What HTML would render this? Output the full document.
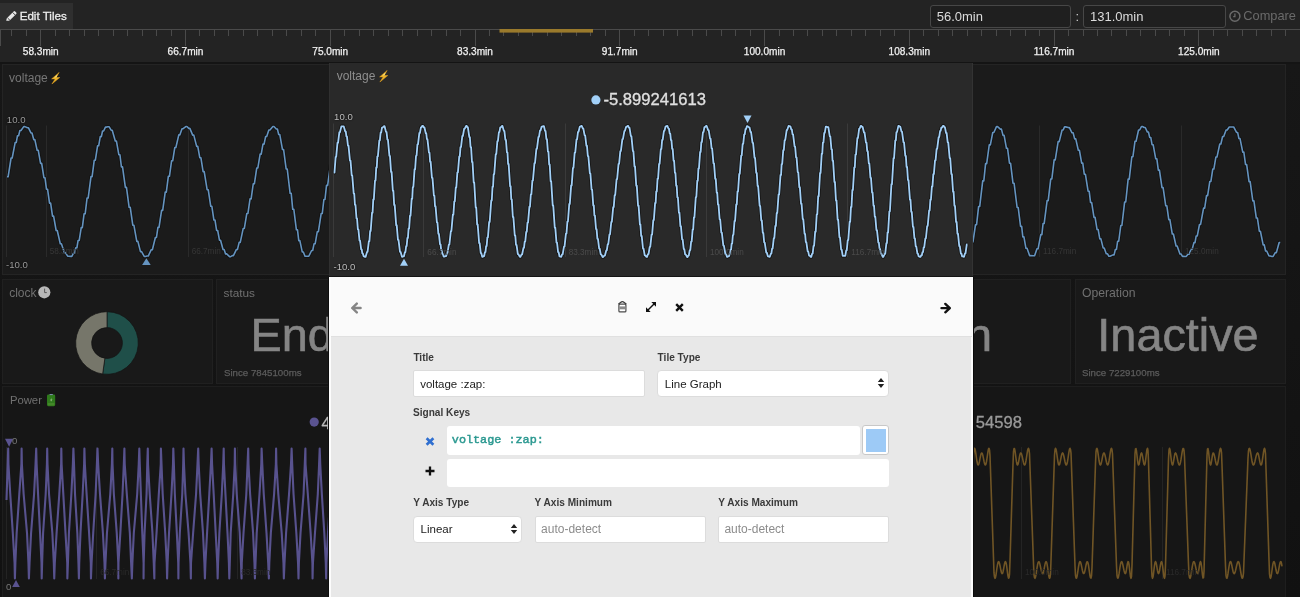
<!DOCTYPE html><html><head><meta charset="utf-8"><style>html,body{margin:0;padding:0}body{width:1300px;height:597px;overflow:hidden;position:relative;background:linear-gradient(#171717 64px,#111111 597px);font-family:"Liberation Sans",sans-serif}#root{position:absolute;left:0;top:0;width:1300px;height:597px;will-change:transform}</style></head><body><div id="root">
<div style="position:absolute;left:0px;top:0px;width:1300px;height:62px;background:#232323;"></div>
<div style="position:absolute;left:0px;top:62px;width:1300px;height:2px;background:#141414;"></div>
<div style="position:absolute;left:0px;top:3px;width:73px;height:25.5px;background:#2f2f2f;"></div>
<svg style="position:absolute;left:5px;top:10px" width="13" height="12" viewBox="0 0 13 12"><path d="M1.2,10.8 L1.8,8.2 L8.6,1.4 Q9.4,0.6 10.2,1.4 L11.2,2.4 Q12,3.2 11.2,4 L4.4,10.8 Z" fill="#e6e6e6"/><path d="M2.6,8.0 L5.0,10.4" stroke="#2f2f2f" stroke-width="0.9"/><path d="M7.6,2.4 L10.2,5.0" stroke="#2f2f2f" stroke-width="0.9"/></svg>
<div style="position:absolute;left:19.70px;top:10.18px;font-size:11.6px;line-height:11.6px;color:#ececec;font-weight:400;white-space:nowrap;font-family:'Liberation Sans', sans-serif;-webkit-text-stroke:0.3px #ececec">Edit Tiles</div>
<div style="position:absolute;left:929.8px;top:5px;width:139.5px;height:20.5px;border:1px solid #474747;border-radius:3px;background:#1f1f1f"></div>
<div style="position:absolute;left:1083px;top:5px;width:141px;height:20.5px;border:1px solid #474747;border-radius:3px;background:#1f1f1f"></div>
<div style="position:absolute;left:936.70px;top:10.20px;font-size:13px;line-height:13px;color:#dcdcdc;font-weight:400;white-space:nowrap;font-family:'Liberation Sans', sans-serif;">56.0min</div>
<div style="position:absolute;left:1075.50px;top:10.20px;font-size:13px;line-height:13px;color:#cfcfcf;font-weight:400;white-space:nowrap;font-family:'Liberation Sans', sans-serif;">:</div>
<div style="position:absolute;left:1090.00px;top:10.20px;font-size:13px;line-height:13px;color:#dcdcdc;font-weight:400;white-space:nowrap;font-family:'Liberation Sans', sans-serif;">131.0min</div>
<svg style="position:absolute;left:1229px;top:10px" width="13" height="13" viewBox="0 0 13 13"><circle cx="5.9" cy="6.3" r="5" fill="none" stroke="#6a6a6a" stroke-width="1.5"/><path d="M5.9,3.6 L5.9,6.6 L4.2,6.6" fill="none" stroke="#6a6a6a" stroke-width="1.3"/></svg>
<div style="position:absolute;left:1243.30px;top:10.16px;font-size:12.8px;line-height:12.8px;color:#6a6a6a;font-weight:400;white-space:nowrap;font-family:'Liberation Sans', sans-serif;">Compare</div>
<svg style="position:absolute;left:0;top:0" width="1300" height="62"><path d="M0,29.5 H1300" stroke="#4a4a4a" stroke-width="1"/><path d="M0.5,29 V46 M11.5,29 V36 M26.5,29 V36 M40.5,29 V46 M55.5,29 V36 M69.5,29 V36 M84.5,29 V36 M98.5,29 V36 M113.5,29 V36 M127.5,29 V36 M142.5,29 V36 M156.5,29 V36 M171.5,29 V36 M185.5,29 V46 M199.5,29 V36 M214.5,29 V36 M228.5,29 V36 M243.5,29 V36 M257.5,29 V36 M272.5,29 V36 M286.5,29 V36 M301.5,29 V36 M315.5,29 V36 M330.5,29 V46 M344.5,29 V36 M359.5,29 V36 M373.5,29 V36 M388.5,29 V36 M402.5,29 V36 M417.5,29 V36 M431.5,29 V36 M446.5,29 V36 M460.5,29 V36 M475.5,29 V46 M489.5,29 V36 M503.5,29 V36 M518.5,29 V36 M532.5,29 V36 M547.5,29 V36 M561.5,29 V36 M576.5,29 V36 M590.5,29 V36 M605.5,29 V36 M619.5,29 V46 M634.5,29 V36 M648.5,29 V36 M663.5,29 V36 M677.5,29 V36 M692.5,29 V36 M706.5,29 V36 M721.5,29 V36 M735.5,29 V36 M750.5,29 V36 M764.5,29 V46 M779.5,29 V36 M793.5,29 V36 M807.5,29 V36 M822.5,29 V36 M836.5,29 V36 M851.5,29 V36 M865.5,29 V36 M880.5,29 V36 M894.5,29 V36 M909.5,29 V46 M923.5,29 V36 M938.5,29 V36 M952.5,29 V36 M967.5,29 V36 M981.5,29 V36 M996.5,29 V36 M1010.5,29 V36 M1025.5,29 V36 M1039.5,29 V36 M1054.5,29 V46 M1068.5,29 V36 M1083.5,29 V36 M1097.5,29 V36 M1111.5,29 V36 M1126.5,29 V36 M1140.5,29 V36 M1155.5,29 V36 M1169.5,29 V36 M1184.5,29 V36 M1198.5,29 V46 M1213.5,29 V36 M1227.5,29 V36 M1242.5,29 V36 M1256.5,29 V36 M1271.5,29 V36 M1285.5,29 V36 M1300.5,29 V36 " stroke="#4a4a4a" stroke-width="1"/><rect x="499.5" y="29" width="93.5" height="3.6" fill="#9a7a2c"/></svg>
<div style="position:absolute;left:-259.26px;width:600px;text-align:center;top:46.95px;font-size:10.1px;line-height:10.1px;color:#f0f0f0;font-weight:400;white-space:nowrap;font-family:'Liberation Sans', sans-serif;-webkit-text-stroke:0.25px #f0f0f0">58.3min</div>
<div style="position:absolute;left:-114.50px;width:600px;text-align:center;top:46.95px;font-size:10.1px;line-height:10.1px;color:#f0f0f0;font-weight:400;white-space:nowrap;font-family:'Liberation Sans', sans-serif;-webkit-text-stroke:0.25px #f0f0f0">66.7min</div>
<div style="position:absolute;left:30.26px;width:600px;text-align:center;top:46.95px;font-size:10.1px;line-height:10.1px;color:#f0f0f0;font-weight:400;white-space:nowrap;font-family:'Liberation Sans', sans-serif;-webkit-text-stroke:0.25px #f0f0f0">75.0min</div>
<div style="position:absolute;left:175.02px;width:600px;text-align:center;top:46.95px;font-size:10.1px;line-height:10.1px;color:#f0f0f0;font-weight:400;white-space:nowrap;font-family:'Liberation Sans', sans-serif;-webkit-text-stroke:0.25px #f0f0f0">83.3min</div>
<div style="position:absolute;left:319.78px;width:600px;text-align:center;top:46.95px;font-size:10.1px;line-height:10.1px;color:#f0f0f0;font-weight:400;white-space:nowrap;font-family:'Liberation Sans', sans-serif;-webkit-text-stroke:0.25px #f0f0f0">91.7min</div>
<div style="position:absolute;left:464.54px;width:600px;text-align:center;top:46.95px;font-size:10.1px;line-height:10.1px;color:#f0f0f0;font-weight:400;white-space:nowrap;font-family:'Liberation Sans', sans-serif;-webkit-text-stroke:0.25px #f0f0f0">100.0min</div>
<div style="position:absolute;left:609.30px;width:600px;text-align:center;top:46.95px;font-size:10.1px;line-height:10.1px;color:#f0f0f0;font-weight:400;white-space:nowrap;font-family:'Liberation Sans', sans-serif;-webkit-text-stroke:0.25px #f0f0f0">108.3min</div>
<div style="position:absolute;left:754.06px;width:600px;text-align:center;top:46.95px;font-size:10.1px;line-height:10.1px;color:#f0f0f0;font-weight:400;white-space:nowrap;font-family:'Liberation Sans', sans-serif;-webkit-text-stroke:0.25px #f0f0f0">116.7min</div>
<div style="position:absolute;left:898.82px;width:600px;text-align:center;top:46.95px;font-size:10.1px;line-height:10.1px;color:#f0f0f0;font-weight:400;white-space:nowrap;font-family:'Liberation Sans', sans-serif;-webkit-text-stroke:0.25px #f0f0f0">125.0min</div>
<div style="position:absolute;left:2px;top:64px;width:1282px;height:209px;background:#1b1b1b;border:1px solid #242424"></div>
<div style="position:absolute;left:2px;top:279px;width:209px;height:102.5px;background:#191919;border:1px solid #202020"></div>
<div style="position:absolute;left:216px;top:279px;width:209px;height:102.5px;background:#191919;border:1px solid #202020"></div>
<div style="position:absolute;left:430px;top:279px;width:209px;height:102.5px;background:#191919;border:1px solid #202020"></div>
<div style="position:absolute;left:645px;top:279px;width:424px;height:102.5px;background:#191919;border:1px solid #202020"></div>
<div style="position:absolute;left:1075px;top:279px;width:209px;height:102.5px;background:#191919;border:1px solid #202020"></div>
<div style="position:absolute;left:2px;top:385.5px;width:638px;height:211.5px;background:#161616;border:1px solid #1e1e1e"></div>
<div style="position:absolute;left:645px;top:385.5px;width:639px;height:211.5px;background:#161616;border:1px solid #1e1e1e"></div>
<div style="position:absolute;left:9.10px;top:71.64px;font-size:12px;line-height:12px;color:#767676;font-weight:400;white-space:nowrap;font-family:'Liberation Sans', sans-serif;">voltage</div>
<svg style="position:absolute;left:51px;top:71.8px" width="10" height="13" viewBox="0 0 10 13"><path d="M8.2,0.4 L0.6,6.9 L4.1,6.9 L0.9,12 L8.8,5.5 L5.1,5.5 Z" fill="#eeb52a" stroke="#e0a020" stroke-width="0.5" stroke-linejoin="round"/><path d="M6.6,2.2 L3.2,5.4 L5.6,5.4 Z" fill="#f8dc70"/></svg>
<div style="position:absolute;left:6.80px;top:114.57px;font-size:9.6px;line-height:9.6px;color:#9a9a9a;font-weight:400;white-space:nowrap;font-family:'Liberation Sans', sans-serif;text-shadow:0 0 2px #000">10.0</div>
<div style="position:absolute;left:6.00px;top:260.47px;font-size:9.6px;line-height:9.6px;color:#9a9a9a;font-weight:400;white-space:nowrap;font-family:'Liberation Sans', sans-serif;text-shadow:0 0 2px #000">-10.0</div>
<svg style="position:absolute;left:0;top:0" width="1300" height="280"><path d="M6.5,125.5 V257 M46.5,125.5 V257 M188.5,125.5 V257 M1039.5,125.5 V257 M1181.5,125.5 V257 " stroke="#2a2a2a" stroke-width="1"/><path d="M7.01,176.76 L8.11,176.76 L11.09,158.00 L12.19,158.00 L15.15,142.55 L16.25,142.55 L17.49,135.68 L18.59,135.68 L19.90,130.52 L21.00,130.52 L23.74,126.61 L24.84,126.61 L27.40,127.82 L28.50,127.82 L30.92,132.93 L32.02,132.93 L33.75,139.62 L34.85,139.62 L37.16,150.31 L38.26,150.31 L40.56,163.34 L41.66,163.34 L43.92,177.74 L45.02,177.74 L46.46,189.21 L47.56,189.21 L49.53,203.10 L50.63,203.10 L52.52,216.16 L53.62,216.16 L56.15,230.50 L57.25,230.50 L60.30,243.80 L61.40,243.80 L64.36,252.61 L65.46,252.61 L67.65,256.18 L68.75,256.18 L70.74,256.33 L71.84,256.33 L73.50,253.03 L74.60,253.03 L75.81,247.75 L76.91,247.75 L78.10,240.44 L79.20,240.44 L81.23,227.62 L82.33,227.62 L84.08,213.79 L85.18,213.79 L87.05,198.05 L88.15,198.05 L91.01,176.67 L92.11,176.67 L94.26,160.21 L95.36,160.21 L97.57,145.79 L98.67,145.79 L100.27,136.61 L101.37,136.61 L102.55,130.99 L103.65,130.99 L105.42,127.08 L106.52,127.08 L107.92,126.68 L109.02,126.68 L111.14,130.18 L112.24,130.18 L115.29,140.93 L116.39,140.93 L118.83,154.73 L119.93,154.73 L121.42,166.86 L122.52,166.86 L125.37,187.34 L126.47,187.34 L129.14,207.30 L130.24,207.30 L132.79,225.23 L133.89,225.23 L136.78,241.33 L137.88,241.33 L140.48,251.62 L141.58,251.62 L144.24,256.44 L145.34,256.44 L147.16,256.03 L148.26,256.03 L151.28,249.72 L152.38,249.72 L155.37,237.49 L156.47,237.49 L157.92,227.38 L159.02,227.38 L161.60,210.35 L162.70,210.35 L165.22,192.13 L166.32,192.13 L168.34,176.28 L169.44,176.28 L171.60,160.76 L172.70,160.76 L174.78,147.54 L175.88,147.54 L178.80,134.84 L179.90,134.84 L182.00,128.69 L183.10,128.69 L185.83,126.55 L186.93,126.55 L188.75,128.42 L189.85,128.42 L192.69,135.16 L193.79,135.16 L196.66,146.35 L197.76,146.35 L199.78,157.70 L200.88,157.70 L203.11,171.59 L204.21,171.59 L207.12,189.70 L208.22,189.70 L210.75,206.28 L211.85,206.28 L213.92,220.02 L215.02,220.02 L216.59,230.49 L217.69,230.49 L219.45,240.19 L220.55,240.19 L223.04,249.49 L224.14,249.49 L225.59,253.91 L226.69,253.91 L229.58,256.69 L230.68,256.69 L232.33,255.58 L233.43,255.58 L236.32,249.57 L237.42,249.57 L239.16,242.37 L240.26,242.37 L243.23,228.43 L244.33,228.43 L246.83,213.47 L247.93,213.47 L250.04,198.87 L251.14,198.87 L253.27,183.76 L254.37,183.76 L256.76,167.95 L257.86,167.95 L260.13,154.09 L261.23,154.09 L262.97,144.08 L264.07,144.08 L265.61,136.54 L266.71,136.54 L268.83,130.03 L269.93,130.03 L272.87,126.55 L273.97,126.55 L276.30,128.94 L277.40,128.94 L278.69,134.56 L279.79,134.56 L282.50,149.52 L283.60,149.52 L286.14,168.97 L287.24,168.97 L290.12,193.30 L291.22,193.30 L292.73,209.32 L293.83,209.32 L296.40,229.79 L297.50,229.79 L298.75,240.60 L299.85,240.60 L302.24,251.95 L303.34,251.95 L305.01,256.23 L306.11,256.23 L307.68,256.25 L308.78,256.25 L311.60,250.51 L312.70,250.51 L314.05,243.79 L315.15,243.79 L317.29,231.68 L318.39,231.68 L321.17,213.56 L322.27,213.56 L323.88,199.47 L324.98,199.47 L326.52,185.34 L327.62,185.34 L330.46,165.07 L331.56,165.07 L333.51,151.13 L334.61,151.13 L337.12,137.96 L338.22,137.96 L339.43,131.98 L340.53,131.98 L342.36,127.46 L343.46,127.46 L344.93,126.56 L346.03,126.56 L348.46,130.45 L349.56,130.45 L350.86,136.43 L351.96,136.43 L354.93,151.89 L356.03,151.89 L357.22,162.91 L358.32,162.91 L360.86,182.59 L361.96,182.59 L363.14,195.51 L364.24,195.51 L365.88,210.73 L366.98,210.73 L369.68,229.95 L370.78,229.95 L372.22,240.58 L373.32,240.58 L374.81,248.95 L375.91,248.95 L378.38,255.63 L379.48,255.63 L381.36,256.58 L382.46,256.58 L383.68,255.18 L384.78,255.18 L387.82,248.90 L388.92,248.90 L390.35,242.84 L391.45,242.84 L392.66,236.02 L393.76,236.02 L395.56,225.96 L396.66,225.96 L398.99,212.45 L400.09,212.45 L402.65,196.78 L403.75,196.78 L405.11,186.05 L406.21,186.05 L408.00,173.64 L409.10,173.64 L410.29,164.23 L411.39,164.23 L413.40,152.60 L414.50,152.60 L417.11,140.94 L418.21,140.94 L420.77,132.51 L421.87,132.51 L424.74,127.40 L425.84,127.40 L428.43,126.89 L429.53,126.89 L432.33,133.25 L433.43,133.25 L435.92,145.41 L437.02,145.41 L439.07,160.03 L440.17,160.03 L441.74,174.47 L442.84,174.47 L445.25,194.77 L446.35,194.77 L448.10,211.11 L449.20,211.11 L450.53,224.12 L451.63,224.12 L453.63,238.36 L454.73,238.36 L457.55,251.10 L458.65,251.10 L460.04,255.47 L461.14,255.47 L463.40,256.43 L464.50,256.43 L466.39,253.43 L467.49,253.43 L469.62,246.65 L470.72,246.65 L472.14,239.05 L473.24,239.05 L476.22,223.19 L477.32,223.19 L478.96,210.76 L480.06,210.76 L482.36,194.23 L483.46,194.23 L485.41,179.25 L486.51,179.25 L487.68,168.45 L488.78,168.45 L491.00,154.05 L492.10,154.05 L493.50,144.65 L494.60,144.65 L495.85,137.40 L496.95,137.40 L498.16,131.95 L499.26,131.95 L500.71,128.05 L501.81,128.05 L503.13,126.54 L504.23,126.54 L506.59,128.00 L507.69,128.00 L509.81,132.84 L510.91,132.84 L513.94,143.53 L515.04,143.53 L517.97,158.00 L519.07,158.00 L522.12,175.77 L523.22,175.77 L524.80,188.11 L525.90,188.11 L527.90,202.46 L529.00,202.46 L530.62,214.67 L531.72,214.67 L534.00,228.55 L535.10,228.55 L537.43,240.48 L538.53,240.48 L541.21,250.18 L542.31,250.18 L544.81,255.48 L545.91,255.48 L547.54,256.70 L548.64,256.70 L550.60,255.48 L551.70,255.48 L553.85,251.59 L554.95,251.59 L556.10,247.41 L557.20,247.41 L558.40,241.96 L559.50,241.96 L561.43,233.22 L562.53,233.22 L563.88,225.01 L564.98,225.01 L567.51,211.46 L568.61,211.46 L570.22,200.65 L571.32,200.65 L572.65,190.70 L573.75,190.70 L575.24,180.13 L576.34,180.13 L577.92,169.50 L579.02,169.50 L580.58,159.59 L581.68,159.59 L583.82,148.75 L584.92,148.75 L586.95,139.97 L588.05,139.97 L589.78,133.74 L590.88,133.74 L593.26,128.64 L594.36,128.64 L595.90,126.76 L597.00,126.76 L599.88,128.01 L600.98,128.01 L603.97,136.49 L605.07,136.49 L607.61,149.57 L608.71,149.57 L610.69,163.75 L611.79,163.75 L613.91,180.60 L615.01,180.60 L617.26,199.00 L618.36,199.00 L619.60,211.56 L620.70,211.56 L622.64,226.66 L623.74,226.66 L625.89,240.22 L626.99,240.22 L628.48,248.46 L629.58,248.46 L630.90,253.71 L632.00,253.71 L634.68,256.69 L635.78,256.69 L637.62,254.85 L638.72,254.85 L640.86,249.16 L641.96,249.16 L644.87,237.31 L645.97,237.31 L648.28,223.83 L649.38,223.83 L651.08,211.10 L652.18,211.10 L655.21,190.88 L656.31,190.88 L658.16,176.33 L659.26,176.33 L660.44,165.61 L661.54,165.61 L663.99,150.55 L665.09,150.55 L666.43,141.91 L667.53,141.91 L669.26,134.05 L670.36,134.05 L673.11,127.70 L674.21,127.70 L676.64,126.70 L677.74,126.70 L678.91,128.54 L680.01,128.54 L682.02,134.11 L683.12,134.11 L685.05,142.65 L686.15,142.65 L688.22,154.38 L689.32,154.38 L690.86,165.83 L691.96,165.83 L694.23,181.90 L695.33,181.90 L696.61,193.71 L697.71,193.71 L699.40,207.40 L700.50,207.40 L702.35,221.14 L703.45,221.14 L706.39,237.35 L707.49,237.35 L708.78,244.99 L709.88,244.99 L712.47,253.24 L713.57,253.24 L715.08,256.17 L716.18,256.17 L718.41,256.07 L719.51,256.07 L721.40,251.79 L722.50,251.79 L724.53,243.29 L725.63,243.29 L728.22,228.78 L729.32,228.78 L731.22,214.30 L732.32,214.30 L733.69,201.23 L734.79,201.23 L736.17,187.75 L737.27,187.75 L738.56,174.85 L739.66,174.85 L742.43,155.64 L743.53,155.64 L745.90,141.56 L747.00,141.56 L749.99,130.48 L751.09,130.48 L753.56,126.59 L754.66,126.59 L755.84,126.96 L756.94,126.96 L759.35,130.91 L760.45,130.91 L763.08,139.27 L764.18,139.27 L766.71,150.96 L767.81,150.96 L769.91,163.54 L771.01,163.54 L772.83,176.35 L773.93,176.35 L775.95,190.72 L777.05,190.72 L779.72,208.10 L780.82,208.10 L782.48,220.11 L783.58,220.11 L785.73,232.83 L786.83,232.83 L788.89,243.06 L789.99,243.06 L792.96,252.34 L794.06,252.34 L796.75,256.39 L797.85,256.39 L800.78,255.29 L801.88,255.29 L804.62,248.46 L805.72,248.46 L807.43,240.20 L808.53,240.20 L810.12,230.12 L811.22,230.12 L813.29,216.05 L814.39,216.05 L816.03,202.69 L817.13,202.69 L819.09,187.19 L820.19,187.19 L822.64,169.61 L823.74,169.61 L826.64,151.83 L827.74,151.83 L830.01,139.81 L831.11,139.81 L833.82,130.52 L834.92,130.52 L836.24,127.37 L837.34,127.37 L839.16,126.62 L840.26,126.62 L843.32,130.83 L844.42,130.83 L845.84,136.18 L846.94,136.18 L848.88,145.15 L849.98,145.15 L851.25,153.77 L852.35,153.77 L853.65,163.70 L854.75,163.70 L857.61,181.78 L858.71,181.78 L861.75,201.54 L862.85,201.54 L865.24,217.55 L866.34,217.55 L867.72,227.99 L868.82,227.99 L870.53,238.30 L871.63,238.30 L873.22,246.30 L874.32,246.30 L876.74,253.53 L877.84,253.53 L880.29,256.61 L881.39,256.61 L883.38,255.60 L884.48,255.60 L886.62,250.64 L887.72,250.64 L889.08,244.40 L890.18,244.40 L892.35,233.16 L893.45,233.16 L896.42,215.63 L897.52,215.63 L900.11,197.62 L901.21,197.62 L902.53,185.42 L903.63,185.42 L905.77,169.58 L906.87,169.58 L909.38,153.54 L910.48,153.54 L912.11,143.30 L913.21,143.30 L916.07,132.39 L917.17,132.39 L919.20,127.63 L920.30,127.63 L922.79,126.74 L923.89,126.74 L925.80,129.50 L926.90,129.50 L929.95,138.13 L931.05,138.13 L933.70,150.09 L934.80,150.09 L937.04,163.38 L938.14,163.38 L939.56,174.54 L940.66,174.54 L942.64,188.97 L943.74,188.97 L944.94,199.82 L946.04,199.82 L948.32,215.31 L949.42,215.31 L952.25,231.47 L953.35,231.47 L954.84,240.39 L955.94,240.39 L958.06,249.06 L959.16,249.06 L961.23,254.53 L962.33,254.53 L964.24,256.65 L965.34,256.65 L967.85,253.85 L968.95,253.85 L971.89,241.89 L972.99,241.89 L975.48,224.78 L976.58,224.78 L978.63,206.44 L979.73,206.44 L982.72,180.86 L983.82,180.86 L985.59,163.62 L986.69,163.62 L989.26,144.91 L990.36,144.91 L992.77,132.47 L993.87,132.47 L996.47,126.67 L997.57,126.67 L1000.34,129.13 L1001.44,129.13 L1003.02,135.42 L1004.12,135.42 L1006.45,148.32 L1007.55,148.32 L1009.46,163.19 L1010.56,163.19 L1012.98,183.18 L1014.08,183.18 L1017.10,207.49 L1018.20,207.49 L1020.56,226.34 L1021.66,226.34 L1022.82,236.91 L1023.92,236.91 L1025.95,248.27 L1027.05,248.27 L1029.56,255.59 L1030.66,255.59 L1033.49,255.69 L1034.59,255.69 L1036.98,248.80 L1038.08,248.80 L1040.79,234.64 L1041.89,234.64 L1043.06,223.55 L1044.16,223.55 L1047.11,200.67 L1048.21,200.67 L1050.75,178.95 L1051.85,178.95 L1054.16,159.86 L1055.26,159.86 L1058.14,141.60 L1059.24,141.60 L1062.08,130.06 L1063.18,130.06 L1064.51,126.88 L1065.61,126.88 L1068.31,127.60 L1069.41,127.60 L1072.03,132.79 L1073.13,132.79 L1074.65,138.87 L1075.75,138.87 L1078.32,150.28 L1079.42,150.28 L1081.68,163.13 L1082.78,163.13 L1084.29,174.22 L1085.39,174.22 L1088.08,191.22 L1089.18,191.22 L1090.58,202.56 L1091.68,202.56 L1094.00,217.42 L1095.10,217.42 L1097.07,229.56 L1098.17,229.56 L1099.80,238.89 L1100.90,238.89 L1103.12,247.93 L1104.22,247.93 L1106.26,253.68 L1107.36,253.68 L1108.90,256.22 L1110.00,256.22 L1112.99,254.88 L1114.09,254.88 L1115.37,249.43 L1116.47,249.43 L1117.62,241.25 L1118.72,241.25 L1120.79,225.49 L1121.89,225.49 L1124.64,201.96 L1125.74,201.96 L1128.14,179.08 L1129.24,179.08 L1131.83,156.72 L1132.93,156.72 L1135.00,141.22 L1136.10,141.22 L1138.54,130.00 L1139.64,130.00 L1141.42,126.55 L1142.52,126.55 L1144.17,127.52 L1145.27,127.52 L1147.38,132.07 L1148.48,132.07 L1149.67,137.44 L1150.77,137.44 L1152.06,144.73 L1153.16,144.73 L1155.75,158.80 L1156.85,158.80 L1158.32,170.16 L1159.42,170.16 L1162.01,187.67 L1163.11,187.67 L1165.75,205.79 L1166.85,205.79 L1168.77,219.63 L1169.87,219.63 L1172.30,234.01 L1173.40,234.01 L1176.06,246.03 L1177.16,246.03 L1179.95,254.00 L1181.05,254.00 L1182.45,256.36 L1183.55,256.36 L1185.01,256.50 L1186.11,256.50 L1187.98,254.23 L1189.08,254.23 L1191.11,249.21 L1192.21,249.21 L1193.92,242.59 L1195.02,242.59 L1196.18,235.95 L1197.28,235.95 L1199.49,224.48 L1200.59,224.48 L1203.58,208.16 L1204.68,208.16 L1206.53,195.60 L1207.63,195.60 L1209.80,181.48 L1210.90,181.48 L1212.77,169.04 L1213.87,169.04 L1215.86,157.06 L1216.96,157.06 L1219.78,144.03 L1220.88,144.03 L1222.61,136.55 L1223.71,136.55 L1226.09,130.04 L1227.19,130.04 L1229.26,126.97 L1230.36,126.97 L1232.54,126.93 L1233.64,126.93 L1236.53,132.43 L1237.63,132.43 L1238.92,138.55 L1240.02,138.55 L1242.74,152.14 L1243.84,152.14 L1245.57,164.54 L1246.67,164.54 L1249.05,181.60 L1250.15,181.60 L1252.82,200.87 L1253.92,200.87 L1256.31,218.05 L1257.41,218.05 L1259.31,231.23 L1260.41,231.23 L1263.16,244.87 L1264.26,244.87 L1265.58,250.99 L1266.68,250.99 L1269.03,255.98 L1270.13,255.98 L1272.02,256.44 L1273.12,256.44 L1275.28,252.59 L1276.38,252.59 L1279.16,242.44 L1280.26,242.44" fill="none" stroke="#0e0e0e" stroke-width="3.4" stroke-linejoin="round" opacity="0.6"/><path d="M7.01,176.76 L8.11,176.76 L11.09,158.00 L12.19,158.00 L15.15,142.55 L16.25,142.55 L17.49,135.68 L18.59,135.68 L19.90,130.52 L21.00,130.52 L23.74,126.61 L24.84,126.61 L27.40,127.82 L28.50,127.82 L30.92,132.93 L32.02,132.93 L33.75,139.62 L34.85,139.62 L37.16,150.31 L38.26,150.31 L40.56,163.34 L41.66,163.34 L43.92,177.74 L45.02,177.74 L46.46,189.21 L47.56,189.21 L49.53,203.10 L50.63,203.10 L52.52,216.16 L53.62,216.16 L56.15,230.50 L57.25,230.50 L60.30,243.80 L61.40,243.80 L64.36,252.61 L65.46,252.61 L67.65,256.18 L68.75,256.18 L70.74,256.33 L71.84,256.33 L73.50,253.03 L74.60,253.03 L75.81,247.75 L76.91,247.75 L78.10,240.44 L79.20,240.44 L81.23,227.62 L82.33,227.62 L84.08,213.79 L85.18,213.79 L87.05,198.05 L88.15,198.05 L91.01,176.67 L92.11,176.67 L94.26,160.21 L95.36,160.21 L97.57,145.79 L98.67,145.79 L100.27,136.61 L101.37,136.61 L102.55,130.99 L103.65,130.99 L105.42,127.08 L106.52,127.08 L107.92,126.68 L109.02,126.68 L111.14,130.18 L112.24,130.18 L115.29,140.93 L116.39,140.93 L118.83,154.73 L119.93,154.73 L121.42,166.86 L122.52,166.86 L125.37,187.34 L126.47,187.34 L129.14,207.30 L130.24,207.30 L132.79,225.23 L133.89,225.23 L136.78,241.33 L137.88,241.33 L140.48,251.62 L141.58,251.62 L144.24,256.44 L145.34,256.44 L147.16,256.03 L148.26,256.03 L151.28,249.72 L152.38,249.72 L155.37,237.49 L156.47,237.49 L157.92,227.38 L159.02,227.38 L161.60,210.35 L162.70,210.35 L165.22,192.13 L166.32,192.13 L168.34,176.28 L169.44,176.28 L171.60,160.76 L172.70,160.76 L174.78,147.54 L175.88,147.54 L178.80,134.84 L179.90,134.84 L182.00,128.69 L183.10,128.69 L185.83,126.55 L186.93,126.55 L188.75,128.42 L189.85,128.42 L192.69,135.16 L193.79,135.16 L196.66,146.35 L197.76,146.35 L199.78,157.70 L200.88,157.70 L203.11,171.59 L204.21,171.59 L207.12,189.70 L208.22,189.70 L210.75,206.28 L211.85,206.28 L213.92,220.02 L215.02,220.02 L216.59,230.49 L217.69,230.49 L219.45,240.19 L220.55,240.19 L223.04,249.49 L224.14,249.49 L225.59,253.91 L226.69,253.91 L229.58,256.69 L230.68,256.69 L232.33,255.58 L233.43,255.58 L236.32,249.57 L237.42,249.57 L239.16,242.37 L240.26,242.37 L243.23,228.43 L244.33,228.43 L246.83,213.47 L247.93,213.47 L250.04,198.87 L251.14,198.87 L253.27,183.76 L254.37,183.76 L256.76,167.95 L257.86,167.95 L260.13,154.09 L261.23,154.09 L262.97,144.08 L264.07,144.08 L265.61,136.54 L266.71,136.54 L268.83,130.03 L269.93,130.03 L272.87,126.55 L273.97,126.55 L276.30,128.94 L277.40,128.94 L278.69,134.56 L279.79,134.56 L282.50,149.52 L283.60,149.52 L286.14,168.97 L287.24,168.97 L290.12,193.30 L291.22,193.30 L292.73,209.32 L293.83,209.32 L296.40,229.79 L297.50,229.79 L298.75,240.60 L299.85,240.60 L302.24,251.95 L303.34,251.95 L305.01,256.23 L306.11,256.23 L307.68,256.25 L308.78,256.25 L311.60,250.51 L312.70,250.51 L314.05,243.79 L315.15,243.79 L317.29,231.68 L318.39,231.68 L321.17,213.56 L322.27,213.56 L323.88,199.47 L324.98,199.47 L326.52,185.34 L327.62,185.34 L330.46,165.07 L331.56,165.07 L333.51,151.13 L334.61,151.13 L337.12,137.96 L338.22,137.96 L339.43,131.98 L340.53,131.98 L342.36,127.46 L343.46,127.46 L344.93,126.56 L346.03,126.56 L348.46,130.45 L349.56,130.45 L350.86,136.43 L351.96,136.43 L354.93,151.89 L356.03,151.89 L357.22,162.91 L358.32,162.91 L360.86,182.59 L361.96,182.59 L363.14,195.51 L364.24,195.51 L365.88,210.73 L366.98,210.73 L369.68,229.95 L370.78,229.95 L372.22,240.58 L373.32,240.58 L374.81,248.95 L375.91,248.95 L378.38,255.63 L379.48,255.63 L381.36,256.58 L382.46,256.58 L383.68,255.18 L384.78,255.18 L387.82,248.90 L388.92,248.90 L390.35,242.84 L391.45,242.84 L392.66,236.02 L393.76,236.02 L395.56,225.96 L396.66,225.96 L398.99,212.45 L400.09,212.45 L402.65,196.78 L403.75,196.78 L405.11,186.05 L406.21,186.05 L408.00,173.64 L409.10,173.64 L410.29,164.23 L411.39,164.23 L413.40,152.60 L414.50,152.60 L417.11,140.94 L418.21,140.94 L420.77,132.51 L421.87,132.51 L424.74,127.40 L425.84,127.40 L428.43,126.89 L429.53,126.89 L432.33,133.25 L433.43,133.25 L435.92,145.41 L437.02,145.41 L439.07,160.03 L440.17,160.03 L441.74,174.47 L442.84,174.47 L445.25,194.77 L446.35,194.77 L448.10,211.11 L449.20,211.11 L450.53,224.12 L451.63,224.12 L453.63,238.36 L454.73,238.36 L457.55,251.10 L458.65,251.10 L460.04,255.47 L461.14,255.47 L463.40,256.43 L464.50,256.43 L466.39,253.43 L467.49,253.43 L469.62,246.65 L470.72,246.65 L472.14,239.05 L473.24,239.05 L476.22,223.19 L477.32,223.19 L478.96,210.76 L480.06,210.76 L482.36,194.23 L483.46,194.23 L485.41,179.25 L486.51,179.25 L487.68,168.45 L488.78,168.45 L491.00,154.05 L492.10,154.05 L493.50,144.65 L494.60,144.65 L495.85,137.40 L496.95,137.40 L498.16,131.95 L499.26,131.95 L500.71,128.05 L501.81,128.05 L503.13,126.54 L504.23,126.54 L506.59,128.00 L507.69,128.00 L509.81,132.84 L510.91,132.84 L513.94,143.53 L515.04,143.53 L517.97,158.00 L519.07,158.00 L522.12,175.77 L523.22,175.77 L524.80,188.11 L525.90,188.11 L527.90,202.46 L529.00,202.46 L530.62,214.67 L531.72,214.67 L534.00,228.55 L535.10,228.55 L537.43,240.48 L538.53,240.48 L541.21,250.18 L542.31,250.18 L544.81,255.48 L545.91,255.48 L547.54,256.70 L548.64,256.70 L550.60,255.48 L551.70,255.48 L553.85,251.59 L554.95,251.59 L556.10,247.41 L557.20,247.41 L558.40,241.96 L559.50,241.96 L561.43,233.22 L562.53,233.22 L563.88,225.01 L564.98,225.01 L567.51,211.46 L568.61,211.46 L570.22,200.65 L571.32,200.65 L572.65,190.70 L573.75,190.70 L575.24,180.13 L576.34,180.13 L577.92,169.50 L579.02,169.50 L580.58,159.59 L581.68,159.59 L583.82,148.75 L584.92,148.75 L586.95,139.97 L588.05,139.97 L589.78,133.74 L590.88,133.74 L593.26,128.64 L594.36,128.64 L595.90,126.76 L597.00,126.76 L599.88,128.01 L600.98,128.01 L603.97,136.49 L605.07,136.49 L607.61,149.57 L608.71,149.57 L610.69,163.75 L611.79,163.75 L613.91,180.60 L615.01,180.60 L617.26,199.00 L618.36,199.00 L619.60,211.56 L620.70,211.56 L622.64,226.66 L623.74,226.66 L625.89,240.22 L626.99,240.22 L628.48,248.46 L629.58,248.46 L630.90,253.71 L632.00,253.71 L634.68,256.69 L635.78,256.69 L637.62,254.85 L638.72,254.85 L640.86,249.16 L641.96,249.16 L644.87,237.31 L645.97,237.31 L648.28,223.83 L649.38,223.83 L651.08,211.10 L652.18,211.10 L655.21,190.88 L656.31,190.88 L658.16,176.33 L659.26,176.33 L660.44,165.61 L661.54,165.61 L663.99,150.55 L665.09,150.55 L666.43,141.91 L667.53,141.91 L669.26,134.05 L670.36,134.05 L673.11,127.70 L674.21,127.70 L676.64,126.70 L677.74,126.70 L678.91,128.54 L680.01,128.54 L682.02,134.11 L683.12,134.11 L685.05,142.65 L686.15,142.65 L688.22,154.38 L689.32,154.38 L690.86,165.83 L691.96,165.83 L694.23,181.90 L695.33,181.90 L696.61,193.71 L697.71,193.71 L699.40,207.40 L700.50,207.40 L702.35,221.14 L703.45,221.14 L706.39,237.35 L707.49,237.35 L708.78,244.99 L709.88,244.99 L712.47,253.24 L713.57,253.24 L715.08,256.17 L716.18,256.17 L718.41,256.07 L719.51,256.07 L721.40,251.79 L722.50,251.79 L724.53,243.29 L725.63,243.29 L728.22,228.78 L729.32,228.78 L731.22,214.30 L732.32,214.30 L733.69,201.23 L734.79,201.23 L736.17,187.75 L737.27,187.75 L738.56,174.85 L739.66,174.85 L742.43,155.64 L743.53,155.64 L745.90,141.56 L747.00,141.56 L749.99,130.48 L751.09,130.48 L753.56,126.59 L754.66,126.59 L755.84,126.96 L756.94,126.96 L759.35,130.91 L760.45,130.91 L763.08,139.27 L764.18,139.27 L766.71,150.96 L767.81,150.96 L769.91,163.54 L771.01,163.54 L772.83,176.35 L773.93,176.35 L775.95,190.72 L777.05,190.72 L779.72,208.10 L780.82,208.10 L782.48,220.11 L783.58,220.11 L785.73,232.83 L786.83,232.83 L788.89,243.06 L789.99,243.06 L792.96,252.34 L794.06,252.34 L796.75,256.39 L797.85,256.39 L800.78,255.29 L801.88,255.29 L804.62,248.46 L805.72,248.46 L807.43,240.20 L808.53,240.20 L810.12,230.12 L811.22,230.12 L813.29,216.05 L814.39,216.05 L816.03,202.69 L817.13,202.69 L819.09,187.19 L820.19,187.19 L822.64,169.61 L823.74,169.61 L826.64,151.83 L827.74,151.83 L830.01,139.81 L831.11,139.81 L833.82,130.52 L834.92,130.52 L836.24,127.37 L837.34,127.37 L839.16,126.62 L840.26,126.62 L843.32,130.83 L844.42,130.83 L845.84,136.18 L846.94,136.18 L848.88,145.15 L849.98,145.15 L851.25,153.77 L852.35,153.77 L853.65,163.70 L854.75,163.70 L857.61,181.78 L858.71,181.78 L861.75,201.54 L862.85,201.54 L865.24,217.55 L866.34,217.55 L867.72,227.99 L868.82,227.99 L870.53,238.30 L871.63,238.30 L873.22,246.30 L874.32,246.30 L876.74,253.53 L877.84,253.53 L880.29,256.61 L881.39,256.61 L883.38,255.60 L884.48,255.60 L886.62,250.64 L887.72,250.64 L889.08,244.40 L890.18,244.40 L892.35,233.16 L893.45,233.16 L896.42,215.63 L897.52,215.63 L900.11,197.62 L901.21,197.62 L902.53,185.42 L903.63,185.42 L905.77,169.58 L906.87,169.58 L909.38,153.54 L910.48,153.54 L912.11,143.30 L913.21,143.30 L916.07,132.39 L917.17,132.39 L919.20,127.63 L920.30,127.63 L922.79,126.74 L923.89,126.74 L925.80,129.50 L926.90,129.50 L929.95,138.13 L931.05,138.13 L933.70,150.09 L934.80,150.09 L937.04,163.38 L938.14,163.38 L939.56,174.54 L940.66,174.54 L942.64,188.97 L943.74,188.97 L944.94,199.82 L946.04,199.82 L948.32,215.31 L949.42,215.31 L952.25,231.47 L953.35,231.47 L954.84,240.39 L955.94,240.39 L958.06,249.06 L959.16,249.06 L961.23,254.53 L962.33,254.53 L964.24,256.65 L965.34,256.65 L967.85,253.85 L968.95,253.85 L971.89,241.89 L972.99,241.89 L975.48,224.78 L976.58,224.78 L978.63,206.44 L979.73,206.44 L982.72,180.86 L983.82,180.86 L985.59,163.62 L986.69,163.62 L989.26,144.91 L990.36,144.91 L992.77,132.47 L993.87,132.47 L996.47,126.67 L997.57,126.67 L1000.34,129.13 L1001.44,129.13 L1003.02,135.42 L1004.12,135.42 L1006.45,148.32 L1007.55,148.32 L1009.46,163.19 L1010.56,163.19 L1012.98,183.18 L1014.08,183.18 L1017.10,207.49 L1018.20,207.49 L1020.56,226.34 L1021.66,226.34 L1022.82,236.91 L1023.92,236.91 L1025.95,248.27 L1027.05,248.27 L1029.56,255.59 L1030.66,255.59 L1033.49,255.69 L1034.59,255.69 L1036.98,248.80 L1038.08,248.80 L1040.79,234.64 L1041.89,234.64 L1043.06,223.55 L1044.16,223.55 L1047.11,200.67 L1048.21,200.67 L1050.75,178.95 L1051.85,178.95 L1054.16,159.86 L1055.26,159.86 L1058.14,141.60 L1059.24,141.60 L1062.08,130.06 L1063.18,130.06 L1064.51,126.88 L1065.61,126.88 L1068.31,127.60 L1069.41,127.60 L1072.03,132.79 L1073.13,132.79 L1074.65,138.87 L1075.75,138.87 L1078.32,150.28 L1079.42,150.28 L1081.68,163.13 L1082.78,163.13 L1084.29,174.22 L1085.39,174.22 L1088.08,191.22 L1089.18,191.22 L1090.58,202.56 L1091.68,202.56 L1094.00,217.42 L1095.10,217.42 L1097.07,229.56 L1098.17,229.56 L1099.80,238.89 L1100.90,238.89 L1103.12,247.93 L1104.22,247.93 L1106.26,253.68 L1107.36,253.68 L1108.90,256.22 L1110.00,256.22 L1112.99,254.88 L1114.09,254.88 L1115.37,249.43 L1116.47,249.43 L1117.62,241.25 L1118.72,241.25 L1120.79,225.49 L1121.89,225.49 L1124.64,201.96 L1125.74,201.96 L1128.14,179.08 L1129.24,179.08 L1131.83,156.72 L1132.93,156.72 L1135.00,141.22 L1136.10,141.22 L1138.54,130.00 L1139.64,130.00 L1141.42,126.55 L1142.52,126.55 L1144.17,127.52 L1145.27,127.52 L1147.38,132.07 L1148.48,132.07 L1149.67,137.44 L1150.77,137.44 L1152.06,144.73 L1153.16,144.73 L1155.75,158.80 L1156.85,158.80 L1158.32,170.16 L1159.42,170.16 L1162.01,187.67 L1163.11,187.67 L1165.75,205.79 L1166.85,205.79 L1168.77,219.63 L1169.87,219.63 L1172.30,234.01 L1173.40,234.01 L1176.06,246.03 L1177.16,246.03 L1179.95,254.00 L1181.05,254.00 L1182.45,256.36 L1183.55,256.36 L1185.01,256.50 L1186.11,256.50 L1187.98,254.23 L1189.08,254.23 L1191.11,249.21 L1192.21,249.21 L1193.92,242.59 L1195.02,242.59 L1196.18,235.95 L1197.28,235.95 L1199.49,224.48 L1200.59,224.48 L1203.58,208.16 L1204.68,208.16 L1206.53,195.60 L1207.63,195.60 L1209.80,181.48 L1210.90,181.48 L1212.77,169.04 L1213.87,169.04 L1215.86,157.06 L1216.96,157.06 L1219.78,144.03 L1220.88,144.03 L1222.61,136.55 L1223.71,136.55 L1226.09,130.04 L1227.19,130.04 L1229.26,126.97 L1230.36,126.97 L1232.54,126.93 L1233.64,126.93 L1236.53,132.43 L1237.63,132.43 L1238.92,138.55 L1240.02,138.55 L1242.74,152.14 L1243.84,152.14 L1245.57,164.54 L1246.67,164.54 L1249.05,181.60 L1250.15,181.60 L1252.82,200.87 L1253.92,200.87 L1256.31,218.05 L1257.41,218.05 L1259.31,231.23 L1260.41,231.23 L1263.16,244.87 L1264.26,244.87 L1265.58,250.99 L1266.68,250.99 L1269.03,255.98 L1270.13,255.98 L1272.02,256.44 L1273.12,256.44 L1275.28,252.59 L1276.38,252.59 L1279.16,242.44 L1280.26,242.44" fill="none" stroke="#6594c0" stroke-width="1.6" stroke-linejoin="round"/><path d="M142.1,265.1 L146.4,258.3 L150.7,265.1 Z" fill="#6594c0"/></svg>
<div style="position:absolute;left:49.73px;top:248.36px;font-size:8.2px;line-height:8.2px;color:#363636;font-weight:400;white-space:nowrap;font-family:'Liberation Sans', sans-serif;">58.3min</div>
<div style="position:absolute;left:191.65px;top:248.36px;font-size:8.2px;line-height:8.2px;color:#363636;font-weight:400;white-space:nowrap;font-family:'Liberation Sans', sans-serif;">66.7min</div>
<div style="position:absolute;left:1043.12px;top:248.36px;font-size:8.2px;line-height:8.2px;color:#363636;font-weight:400;white-space:nowrap;font-family:'Liberation Sans', sans-serif;">116.7min</div>
<div style="position:absolute;left:1185.02px;top:248.36px;font-size:8.2px;line-height:8.2px;color:#363636;font-weight:400;white-space:nowrap;font-family:'Liberation Sans', sans-serif;">125.0min</div>
<div style="position:absolute;left:9.20px;top:286.84px;font-size:12px;line-height:12px;color:#707070;font-weight:400;white-space:nowrap;font-family:'Liberation Sans', sans-serif;">clock</div>
<svg style="position:absolute;left:38px;top:285.7px" width="13" height="13" viewBox="0 0 13 13"><circle cx="6.3" cy="6.3" r="6.1" fill="#b8b8b8"/><path d="M6.6,2.6 V6.6 H8.8" fill="none" stroke="#5a5a5a" stroke-width="1"/></svg>
<svg style="position:absolute;left:69.7px;top:306.2px" width="74" height="74" viewBox="-37 -37 74 74"><path d="M0.00,-31.30 A31.3,31.3 0 1 1 -4.36,31.00 L-2.14,15.25 A15.4,15.4 0 1 0 0.00,-15.40 Z" fill="#1f4f49" stroke="#141414" stroke-width="0.7"/><path d="M-4.36,31.00 A31.3,31.3 0 0 1 -0.00,-31.30 L-0.00,-15.40 A15.4,15.4 0 0 0 -2.14,15.25 Z" fill="#76766a" stroke="#141414" stroke-width="0.7"/></svg>
<div style="position:absolute;left:223.50px;top:287.51px;font-size:11.8px;line-height:11.8px;color:#707070;font-weight:400;white-space:nowrap;font-family:'Liberation Sans', sans-serif;">status</div>
<div style="position:absolute;left:250.50px;top:311.88px;font-size:46.8px;line-height:46.8px;color:#858585;font-weight:400;white-space:nowrap;font-family:'Liberation Sans', sans-serif;-webkit-text-stroke:0.6px #858585">Ended</div>
<div style="position:absolute;left:224.00px;top:367.59px;font-size:9.7px;line-height:9.7px;color:#5c5c5c;font-weight:400;white-space:nowrap;font-family:'Liberation Sans', sans-serif;-webkit-text-stroke:0.25px #5c5c5c">Since 7845100ms</div>
<div style="position:absolute;right:308.00px;top:311.88px;font-size:46.8px;line-height:46.8px;color:#858585;font-weight:400;white-space:nowrap;font-family:'Liberation Sans', sans-serif;-webkit-text-stroke:0.6px #858585">On</div>
<div style="position:absolute;left:1082.00px;top:287.37px;font-size:12.2px;line-height:12.2px;color:#707070;font-weight:400;white-space:nowrap;font-family:'Liberation Sans', sans-serif;">Operation</div>
<div style="position:absolute;left:878.00px;width:600px;text-align:center;top:312.38px;font-size:46.8px;line-height:46.8px;color:#858585;font-weight:400;white-space:nowrap;font-family:'Liberation Sans', sans-serif;-webkit-text-stroke:0.6px #858585">Inactive</div>
<div style="position:absolute;left:1082.00px;top:367.99px;font-size:9.7px;line-height:9.7px;color:#5c5c5c;font-weight:400;white-space:nowrap;font-family:'Liberation Sans', sans-serif;-webkit-text-stroke:0.25px #5c5c5c">Since 7229100ms</div>
<div style="position:absolute;left:9.90px;top:395.43px;font-size:11.3px;line-height:11.3px;color:#707070;font-weight:400;white-space:nowrap;font-family:'Liberation Sans', sans-serif;">Power</div>
<svg style="position:absolute;left:46.8px;top:393.5px" width="9" height="13" viewBox="0 0 9 13"><rect x="0" y="0.6" width="8.2" height="11.6" rx="1.4" fill="#2f7a1c"/><rect x="0.8" y="9" width="6.6" height="2.4" fill="#44882a"/><rect x="2.6" y="0" width="3.2" height="1.1" fill="#7b8ca8"/><path d="M4.6,3.6 L3.2,6.4 L4.4,6.4 L3.6,8.4 L5.4,5.6 L4.2,5.6 Z" fill="#a8c898"/></svg>
<svg style="position:absolute;left:0;top:0" width="1300" height="597"><path d="M6.5,447 V579 M96.5,447 V579 M237.5,447 V579 M1021.5,447 V579 M1162.5,447 V579 " stroke="#242424" stroke-width="1"/><path d="M6.50,500.00 L8.20,448.50 L8.44,464.10 L10.24,494.00 L12.81,533.00 L14.56,562.90 L14.90,578.50 L15.38,562.90 L16.65,533.00 L19.30,494.00 L21.40,464.10 L21.60,448.50 L21.89,464.10 L23.63,494.00 L27.01,533.00 L28.44,562.90 L28.90,578.50 L29.54,562.90 L31.08,533.00 L34.09,494.00 L35.55,464.10 L36.20,448.50 L36.61,464.10 L38.07,494.00 L40.06,533.00 L41.51,562.90 L41.70,578.50 L42.13,562.90 L43.09,533.00 L45.70,494.00 L46.92,464.10 L47.20,448.50 L47.50,464.10 L49.03,494.00 L52.35,533.00 L53.81,562.90 L54.25,578.50 L54.80,562.90 L56.59,533.00 L59.31,494.00 L61.13,464.10 L61.30,448.50 L61.60,464.10 L63.30,494.00 L65.50,533.00 L67.25,562.90 L67.35,578.50 L67.94,562.90 L68.92,533.00 L71.37,494.00 L72.87,464.10 L73.40,448.50 L74.01,464.10 L75.01,494.00 L77.33,533.00 L78.45,562.90 L78.90,578.50 L79.23,562.90 L80.48,533.00 L82.66,494.00 L84.12,464.10 L84.40,448.50 L84.84,464.10 L86.61,494.00 L89.09,533.00 L90.81,562.90 L90.95,578.50 L91.56,562.90 L93.21,533.00 L95.64,494.00 L96.90,464.10 L97.50,448.50 L98.16,464.10 L100.00,494.00 L102.92,533.00 L104.50,562.90 L104.90,578.50 L105.47,562.90 L106.95,533.00 L110.28,494.00 L111.90,464.10 L112.30,448.50 L112.53,464.10 L113.85,494.00 L116.75,533.00 L118.28,562.90 L118.35,578.50 L118.47,562.90 L120.35,533.00 L122.53,494.00 L123.83,464.10 L124.40,448.50 L124.72,464.10 L126.80,494.00 L129.84,533.00 L131.13,562.90 L131.85,578.50 L132.37,562.90 L133.81,533.00 L137.20,494.00 L138.75,464.10 L139.30,448.50 L139.78,464.10 L140.86,494.00 L142.28,533.00 L143.59,562.90 L143.55,578.50 L143.69,562.90 L144.57,533.00 L146.58,494.00 L147.26,464.10 L147.80,448.50 L148.01,464.10 L149.71,494.00 L152.45,533.00 L153.75,562.90 L154.35,578.50 L154.47,562.90 L156.54,533.00 L158.82,494.00 L160.78,464.10 L160.90,448.50 L161.51,464.10 L162.69,494.00 L165.22,533.00 L166.74,562.90 L167.10,578.50 L167.56,562.90 L169.02,533.00 L171.48,494.00 L173.00,464.10 L173.30,448.50 L173.87,464.10 L174.83,494.00 L176.83,533.00 L178.23,562.90 L178.40,578.50 L178.55,562.90 L179.81,533.00 L182.26,494.00 L183.21,464.10 L183.50,448.50 L183.97,464.10 L185.41,494.00 L188.59,533.00 L190.46,562.90 L190.85,578.50 L191.00,562.90 L193.12,533.00 L196.07,494.00 L197.50,464.10 L198.20,448.50 L198.68,464.10 L200.19,494.00 L203.00,533.00 L204.41,562.90 L204.90,578.50 L205.43,562.90 L207.05,533.00 L209.30,494.00 L210.93,464.10 L211.60,448.50 L212.07,464.10 L213.69,494.00 L215.69,533.00 L217.26,562.90 L217.65,578.50 L218.07,562.90 L219.36,533.00 L221.80,494.00 L223.22,464.10 L223.70,448.50 L223.96,464.10 L225.44,494.00 L227.50,533.00 L228.89,562.90 L229.30,578.50 L229.80,562.90 L230.70,533.00 L233.26,494.00 L234.71,464.10 L234.90,448.50 L235.19,464.10 L236.73,494.00 L239.74,533.00 L240.99,562.90 L241.55,578.50 L241.76,562.90 L243.51,533.00 L246.32,494.00 L247.56,464.10 L248.20,448.50 L248.50,464.10 L250.11,494.00 L253.09,533.00 L254.46,562.90 L254.90,578.50 L255.52,562.90 L256.71,533.00 L259.49,494.00 L261.29,464.10 L261.60,448.50 L262.27,464.10 L263.75,494.00 L266.51,533.00 L268.19,562.90 L268.85,578.50 L269.30,562.90 L270.84,533.00 L274.11,494.00 L275.87,464.10 L276.10,448.50 L276.38,464.10 L278.29,494.00 L281.71,533.00 L283.47,562.90 L283.85,578.50 L284.50,562.90 L286.08,533.00 L289.05,494.00 L291.01,464.10 L291.60,448.50 L292.19,464.10 L293.53,494.00 L296.34,533.00 L298.04,562.90 L298.50,578.50 L298.87,562.90 L300.52,533.00 L303.58,494.00 L304.78,464.10 L305.40,448.50 L305.53,464.10 L307.81,494.00 L310.63,533.00 L312.41,562.90 L312.55,578.50 L312.94,562.90 L314.97,533.00 L317.81,494.00 L319.10,464.10 L319.70,448.50 L320.23,464.10 L321.84,494.00 L324.31,533.00 L325.77,562.90 L326.15,578.50 L326.41,562.90 L327.99,533.00 L330.50,494.00 L331.95,464.10 L332.60,448.50 L333.04,464.10 L334.41,494.00 L337.30,533.00 L338.39,562.90 L339.05,578.50 L339.68,562.90 L341.10,533.00 L343.82,494.00 L345.35,464.10 L345.50,448.50 L346.13,464.10 L347.48,494.00 L349.72,533.00 L351.71,562.90 L351.95,578.50 L352.14,562.90 L353.76,533.00 L356.56,494.00 L358.03,464.10 L358.40,448.50 L358.74,464.10 L360.60,494.00 L362.98,533.00 L364.37,562.90 L364.85,578.50 L365.09,562.90 L367.00,533.00 L369.35,494.00 L371.08,464.10 L371.30,448.50 L371.60,464.10 L373.05,494.00 L375.84,533.00 L377.55,562.90 L377.75,578.50 L377.94,562.90 L379.86,533.00 L382.52,494.00 L384.00,464.10 L384.20,448.50 L384.78,464.10 L385.84,494.00 L388.79,533.00 L390.48,562.90 L390.65,578.50 L390.77,562.90 L392.45,533.00 L395.03,494.00 L396.73,464.10 L397.10,448.50 L397.44,464.10 L399.02,494.00 L401.78,533.00 L402.86,562.90 L403.55,578.50 L403.67,562.90 L405.26,533.00 L407.84,494.00 L409.35,464.10 L410.00,448.50 L410.67,464.10 L412.15,494.00 L414.27,533.00 L416.06,562.90 L416.45,578.50 L416.73,562.90 L418.27,533.00 L420.88,494.00 L422.60,464.10 L422.90,448.50 L423.34,464.10 L424.75,494.00 L427.23,533.00 L428.86,562.90 L429.35,578.50 L429.51,562.90 L431.32,533.00 L433.99,494.00 L435.34,464.10 L435.80,448.50 L435.93,464.10 L437.54,494.00 L440.24,533.00 L441.93,562.90 L442.25,578.50 L442.81,562.90 L444.11,533.00 L446.95,494.00 L448.39,464.10 L448.70,448.50 L449.05,464.10 L450.56,494.00 L453.21,533.00 L454.88,562.90 L455.15,578.50 L455.49,562.90 L457.20,533.00 L459.64,494.00 L461.06,464.10 L461.60,448.50 L462.01,464.10 L463.65,494.00 L465.86,533.00 L467.62,562.90 L468.05,578.50 L468.39,562.90 L470.21,533.00 L472.83,494.00 L474.04,464.10 L474.50,448.50 L475.13,464.10 L476.61,494.00 L478.87,533.00 L480.54,562.90 L480.95,578.50 L481.11,562.90 L483.07,533.00 L485.56,494.00 L487.25,464.10 L487.40,448.50 L487.96,464.10 L489.44,494.00 L492.06,533.00 L493.50,562.90 L493.85,578.50 L494.00,562.90 L495.84,533.00 L498.07,494.00 L499.70,464.10 L500.30,448.50 L500.85,464.10 L501.96,494.00 L504.57,533.00 L506.12,562.90 L506.75,578.50 L507.37,562.90 L508.49,533.00 L510.98,494.00 L513.02,464.10 L513.20,448.50 L513.36,464.10 L515.34,494.00 L517.82,533.00 L519.46,562.90 L519.65,578.50 L520.31,562.90 L521.63,533.00 L524.34,494.00 L525.43,464.10 L526.10,448.50 L526.65,464.10 L528.04,494.00 L530.74,533.00 L531.93,562.90 L532.55,578.50 L533.09,562.90 L534.75,533.00 L536.80,494.00 L538.51,464.10 L539.00,448.50 L539.43,464.10 L541.13,494.00 L543.36,533.00 L544.87,562.90 L545.45,578.50 L545.69,562.90 L547.45,533.00 L550.12,494.00 L551.45,464.10 L551.90,448.50 L552.21,464.10 L553.77,494.00 L556.33,533.00 L557.91,562.90 L558.35,578.50 L558.49,562.90 L560.29,533.00 L563.15,494.00 L564.36,464.10 L564.80,448.50 L565.34,464.10 L566.53,494.00 L569.43,533.00 L571.02,562.90 L571.25,578.50 L571.74,562.90 L573.20,533.00 L575.76,494.00 L577.40,464.10 L577.70,448.50 L578.33,464.10 L579.42,494.00 L581.97,533.00 L583.91,562.90 L584.15,578.50 L584.79,562.90 L586.10,533.00 L588.63,494.00 L590.34,464.10 L590.60,448.50 L590.80,464.10 L592.40,494.00 L594.93,533.00 L596.71,562.90 L597.05,578.50 L597.33,562.90 L598.82,533.00 L601.68,494.00 L603.39,464.10 L603.50,448.50 L603.76,464.10 L605.56,494.00 L607.96,533.00 L609.78,562.90 L609.95,578.50 L610.39,562.90 L611.75,533.00 L614.30,494.00 L615.73,464.10 L616.40,448.50 L616.77,464.10 L618.26,494.00 L620.72,533.00 L622.38,562.90 L622.85,578.50 L623.13,562.90 L624.95,533.00 L627.15,494.00 L629.21,464.10 L629.30,448.50 L629.67,464.10 L631.29,494.00 L633.80,533.00 L635.56,562.90 L635.75,578.50 L636.33,562.90 L637.72,533.00 L640.25,494.00" fill="none" stroke="#58528e" stroke-width="2.1" stroke-linejoin="round"/><path d="M649.50,476.91 L650.00,462.19 L650.50,451.48 L651.00,448.70 L651.50,448.45 L652.00,450.20 L652.50,453.24 L653.00,456.85 L653.50,460.32 L654.00,463.06 L654.50,464.67 L655.00,464.99 L655.50,464.06 L656.00,462.15 L656.50,459.65 L657.00,457.04 L657.50,454.81 L658.00,453.36 L658.50,452.93 L659.00,453.49 L659.50,454.90 L660.00,456.94 L660.50,459.30 L661.00,461.63 L661.50,463.56 L662.00,464.76 L662.50,464.99 L663.00,464.13 L663.50,462.24 L664.00,459.49 L664.50,456.25 L665.00,452.98 L665.50,450.23 L666.00,448.55 L666.50,448.47 L667.00,450.43 L667.50,456.83 L668.00,470.25 L668.50,483.67 L669.00,497.09 L669.50,510.51 L670.00,523.92 L670.50,537.34 L671.00,550.76 L671.50,564.18 L672.00,574.67 L672.50,577.58 L673.00,578.31 L673.50,577.24 L674.00,574.86 L674.50,571.74 L675.00,568.42 L675.50,565.42 L676.00,563.14 L676.50,561.83 L677.00,561.62 L677.50,562.43 L678.00,564.09 L678.50,566.30 L679.00,568.70 L679.50,570.91 L680.00,572.61 L680.50,573.55 L681.00,573.53 L681.50,572.29 L682.00,570.02 L682.50,567.21 L683.00,564.47 L683.50,562.41 L684.00,561.57 L684.50,562.24 L685.00,564.42 L685.50,567.79 L686.00,571.74 L686.50,575.41 L687.00,577.84 L687.50,578.12 L688.00,575.48 L688.50,564.35 L689.00,548.28 L689.50,532.22 L690.00,516.15 L690.50,500.09 L691.00,484.02 L691.50,467.96 L692.00,452.86 L692.50,449.05 L693.00,448.37 L693.50,450.14 L694.00,453.48 L694.50,457.43 L695.00,461.09 L695.50,463.75 L696.00,464.97 L696.50,464.65 L697.00,462.97 L697.50,460.40 L698.00,457.54 L698.50,455.02 L699.00,453.37 L699.50,452.94 L700.00,453.79 L700.50,455.73 L701.00,458.37 L701.50,461.15 L702.00,463.50 L702.50,464.85 L703.00,464.84 L703.50,463.35 L704.00,460.52 L704.50,456.83 L705.00,452.99 L705.50,449.85 L706.00,448.32 L706.50,449.21 L707.00,453.14 L707.50,468.44 L708.00,484.19 L708.50,499.93 L709.00,515.68 L709.50,531.42 L710.00,547.16 L710.50,562.91 L711.00,574.99 L711.50,577.95 L712.00,578.04 L712.50,575.94 L713.00,572.48 L713.50,568.60 L714.00,565.11 L714.50,562.65 L715.00,561.60 L715.50,562.03 L716.00,563.73 L716.50,566.27 L717.00,569.07 L717.50,571.55 L718.00,573.19 L718.50,573.67 L719.00,572.95 L719.50,571.19 L720.00,568.74 L720.50,566.05 L721.00,563.65 L721.50,562.03 L722.00,561.58 L722.50,562.50 L723.00,564.72 L723.50,567.95 L724.00,571.67 L724.50,575.15 L725.00,577.61 L725.50,578.28 L726.00,576.48 L726.50,569.52 L727.00,554.43 L727.50,539.34 L728.00,524.25 L728.50,509.16 L729.00,494.07 L729.50,478.98 L730.00,463.89 L730.50,451.86 L731.00,448.80 L731.50,448.42 L732.00,450.16 L732.50,453.29 L733.00,456.99 L733.50,460.52 L734.00,463.25 L734.50,464.78 L735.00,464.93 L735.50,463.80 L736.00,461.70 L736.50,459.07 L737.00,456.45 L737.50,454.33 L738.00,453.12 L738.50,453.01 L739.00,453.87 L739.50,455.53 L740.00,457.74 L740.50,460.16 L741.00,462.42 L741.50,464.12 L742.00,464.98 L742.50,464.77 L743.00,463.46 L743.50,461.15 L744.00,458.10 L744.50,454.75 L745.00,451.61 L745.50,449.26 L746.00,448.28 L746.50,449.17 L747.00,452.31 L747.50,463.81 L748.00,477.38 L748.50,490.96 L749.00,504.53 L749.50,518.10 L750.00,531.68 L750.50,545.25 L751.00,558.82 L751.50,572.39 L752.00,576.76 L752.50,578.27 L753.00,577.79 L753.50,575.78 L754.00,572.82 L754.50,569.47 L755.00,566.28 L755.50,563.72 L756.00,562.10 L756.50,561.57 L757.00,562.13 L757.50,563.61 L758.00,565.74 L758.50,568.16 L759.00,570.47 L759.50,572.32 L760.00,573.44 L760.50,573.64 L761.00,572.88 L761.50,571.27 L762.00,569.06 L762.50,566.59 L763.00,564.28 L763.50,562.52 L764.00,561.63 L764.50,561.83 L765.00,563.18 L765.50,565.56 L766.00,568.69 L766.50,572.10 L767.00,575.25 L767.50,577.52 L768.00,578.32 L768.50,577.12 L769.00,573.55 L769.50,560.34 L770.00,546.53 L770.50,532.72 L771.00,518.91 L771.50,505.10 L772.00,491.28 L772.50,477.47 L773.00,463.66 L773.50,452.19 L774.00,449.08 L774.50,448.29 L775.00,449.41 L775.50,451.89 L776.00,455.14 L776.50,458.54 L777.00,461.55 L777.50,463.76 L778.00,464.90 L778.50,464.88 L779.00,463.81 L779.50,461.91 L780.00,459.54 L780.50,457.10 L781.00,454.97 L781.50,453.51 L782.00,452.93 L782.50,453.62 L783.00,455.84 L783.50,458.97 L784.00,462.13 L784.50,464.39 L785.00,465.00 L785.50,463.60 L786.00,460.35 L786.50,455.98 L787.00,451.65 L787.50,448.75 L788.00,448.68 L788.50,452.53 L789.00,469.29 L789.50,487.67 L790.00,506.05 L790.50,524.43 L791.00,542.81 L791.50,561.18 L792.00,575.25 L792.50,578.21 L793.00,577.43 L793.50,574.11 L794.00,569.65 L794.50,565.44 L795.00,562.54 L795.50,561.57 L796.00,562.57 L796.50,565.09 L797.00,568.33 L797.50,571.33 L798.00,573.26 L798.50,573.62 L799.00,572.61 L799.50,570.54 L800.00,567.84 L800.50,565.07 L801.00,562.83 L801.50,561.66 L802.00,561.89 L802.50,563.62 L803.00,566.63 L803.50,570.41 L804.00,574.21 L804.50,577.15 L805.00,578.32 L805.50,576.92 L806.00,571.05 L806.50,555.26 L807.00,539.46 L807.50,523.66 L808.00,507.87 L808.50,492.07 L809.00,476.27 L809.50,460.48 L810.00,450.74 L810.50,448.41 L811.00,448.85 L811.50,451.33 L812.00,454.97 L812.50,458.85 L813.00,462.16 L813.50,464.33 L814.00,465.03 L814.50,464.27 L815.00,462.32 L815.50,459.65 L816.00,456.86 L816.50,454.54 L817.00,453.17 L817.50,453.03 L818.00,454.26 L818.50,456.62 L819.00,459.55 L819.50,462.38 L820.00,464.39 L820.50,465.02 L821.00,463.99 L821.50,461.37 L822.00,457.60 L822.50,453.48 L823.00,450.02 L823.50,448.32 L824.00,449.36 L824.50,454.63 L825.00,471.38 L825.50,488.12 L826.00,504.87 L826.50,521.62 L827.00,538.37 L827.50,555.12 L828.00,571.87 L828.50,577.23 L829.00,578.29 L829.50,576.60 L830.00,573.15 L830.50,569.03 L831.00,565.25 L831.50,562.62 L832.00,561.58 L832.50,562.20 L833.00,564.20 L833.50,567.03 L834.00,569.97 L834.50,572.33 L835.00,573.57 L835.50,573.52 L836.00,572.59 L836.50,570.95 L837.00,568.84 L837.50,566.53 L838.00,564.37 L838.50,562.67 L839.00,561.71 L839.50,561.68 L840.00,562.66 L840.50,564.58 L841.00,567.27 L841.50,570.40 L842.00,573.54 L842.50,576.23 L843.00,577.95 L843.50,578.23 L844.00,576.68 L844.50,572.65 L845.00,559.75 L845.50,546.84 L846.00,533.94 L846.50,521.03 L847.00,508.13 L847.50,495.22 L848.00,482.32 L848.50,469.41 L849.00,456.51 L849.50,450.48 L850.00,448.52 L850.50,448.47 L851.00,449.94 L851.50,452.47 L852.00,455.57 L852.50,458.73 L853.00,461.53 L853.50,463.63 L854.00,464.81 L854.50,464.98 L855.00,464.19 L855.50,462.62 L856.00,460.52 L856.50,458.22 L857.00,456.04 L857.50,454.29 L858.00,453.20 L858.50,452.95 L859.00,453.98 L859.50,456.27 L860.00,459.26 L860.50,462.20 L861.00,464.33 L861.50,465.03 L862.00,463.96 L862.50,461.21 L863.00,457.29 L863.50,453.06 L864.00,449.67 L864.50,448.28 L865.00,449.94 L865.50,458.34 L866.00,475.58 L866.50,492.82 L867.00,510.06 L867.50,527.30 L868.00,544.54 L868.50,561.77 L869.00,575.09 L869.50,578.10 L870.00,577.75 L870.50,574.97 L871.00,570.92 L871.50,566.77 L872.00,563.50 L872.50,561.76 L873.00,561.81 L873.50,563.46 L874.00,566.19 L874.50,569.25 L875.00,571.88 L875.50,573.43 L876.00,573.57 L876.50,572.58 L877.00,570.68 L877.50,568.22 L878.00,565.63 L878.50,563.39 L879.00,561.94 L879.50,561.60 L880.00,562.53 L880.50,564.69 L881.00,567.80 L881.50,571.37 L882.00,574.80 L882.50,577.35 L883.00,578.32 L883.50,577.10 L884.00,573.23 L884.50,558.68 L885.00,544.11 L885.50,529.53 L886.00,514.95 L886.50,500.37 L887.00,485.79 L887.50,471.22 L888.00,456.64 L888.50,450.13 L889.00,448.34 L889.50,448.87 L890.00,451.12 L890.50,454.41 L891.00,458.01 L891.50,461.27 L892.00,463.68 L892.50,464.90 L893.00,464.84 L893.50,463.62 L894.00,461.52 L894.50,458.97 L895.00,456.44 L895.50,454.38 L896.00,453.16 L896.50,452.98 L897.00,453.78 L897.50,455.41 L898.00,457.63 L898.50,460.08 L899.00,462.37 L899.50,464.11 L900.00,464.98 L900.50,464.77 L901.00,463.42 L901.50,461.05 L902.00,457.95 L902.50,454.56 L903.00,451.41 L903.50,449.12 L904.00,448.28 L904.50,449.39 L905.00,452.84 L905.50,465.55 L906.00,479.28 L906.50,493.01 L907.00,506.74 L907.50,520.47 L908.00,534.20 L908.50,547.93 L909.00,561.66 L909.50,573.97 L910.00,577.31 L910.50,578.32 L911.00,577.40 L911.50,575.06 L912.00,571.89 L912.50,568.50 L913.00,565.43 L913.50,563.10 L914.00,561.80 L914.50,561.64 L915.00,562.55 L915.50,564.33 L916.00,566.63 L916.50,569.08 L917.00,571.28 L917.50,572.88 L918.00,573.64 L918.50,573.49 L919.00,572.60 L919.50,571.09 L920.00,569.14 L920.50,566.98 L921.00,564.89 L921.50,563.14 L922.00,561.97 L922.50,561.57 L923.00,562.04 L923.50,563.38 L924.00,565.51 L924.50,568.21 L925.00,571.20 L925.50,574.10 L926.00,576.51 L926.50,578.02 L927.00,578.23 L927.50,576.82 L928.00,573.56 L928.50,562.08 L929.00,549.97 L929.50,537.86 L930.00,525.75 L930.50,513.64 L931.00,501.53 L931.50,489.42 L932.00,477.31 L932.50,465.20 L933.00,453.28 L933.50,449.91 L934.00,448.40 L934.50,448.53 L935.00,449.98 L935.50,452.35 L936.00,455.23 L936.50,458.22 L937.00,460.95 L937.50,463.12 L938.00,464.51 L938.50,465.03 L939.00,464.67 L939.50,463.54 L940.00,461.82 L940.50,459.74 L941.00,457.58 L941.50,455.61 L942.00,454.07 L942.50,453.14 L943.00,452.96 L943.50,453.94 L944.00,456.05 L944.50,458.82 L945.00,461.66 L945.50,463.90 L946.00,464.99 L946.50,464.57 L947.00,462.58 L947.50,459.31 L948.00,455.36 L948.50,451.57 L949.00,448.92 L949.50,448.39 L950.00,450.78 L950.50,461.08 L951.00,477.31 L951.50,493.55 L952.00,509.78 L952.50,526.01 L953.00,542.24 L953.50,558.47 L954.00,573.74 L954.50,577.57 L955.00,578.22 L955.50,576.38 L956.00,572.97 L956.50,568.97 L957.00,565.31 L957.50,562.71 L958.00,561.60 L958.50,562.06 L959.00,563.86 L959.50,566.52 L960.00,569.40 L960.50,571.86 L961.00,573.37 L961.50,573.62 L962.00,572.72 L962.50,570.89 L963.00,568.45 L963.50,565.84 L964.00,563.54 L964.50,562.00 L965.00,561.58 L965.50,562.45 L966.00,564.56 L966.50,567.65 L967.00,571.24 L967.50,574.70 L968.00,577.30 L968.50,578.32 L969.00,577.13 L969.50,573.26 L970.00,558.68 L970.50,544.01 L971.00,529.34 L971.50,514.67 L972.00,500.00 L972.50,485.33 L973.00,470.67 L973.50,456.00 L974.00,449.98 L974.50,448.32 L975.00,448.97 L975.50,451.33 L976.00,454.68 L976.50,458.30 L977.00,461.53 L977.50,463.85 L978.00,464.95 L978.50,464.77 L979.00,463.42 L979.50,461.23 L980.00,458.64 L980.50,456.13 L981.00,454.16 L981.50,453.07 L982.00,453.05 L982.50,454.11 L983.00,456.07 L983.50,458.56 L984.00,461.16 L984.50,463.37 L985.00,464.74 L985.50,464.97 L986.00,463.90 L986.50,461.61 L987.00,458.40 L987.50,454.79 L988.00,451.41 L988.50,449.01 L989.00,448.30 L989.50,449.89 L990.00,455.56 L990.50,470.23 L991.00,484.90 L991.50,499.57 L992.00,514.24 L992.50,528.91 L993.00,543.58 L993.50,558.24 L994.00,572.91 L994.50,577.05 L995.00,578.32 L995.50,577.36 L996.00,574.79 L996.50,571.35 L997.00,567.75 L997.50,564.64 L998.00,562.49 L998.50,561.59 L999.00,561.97 L999.50,563.48 L1000.00,565.76 L1000.50,568.37 L1001.00,570.82 L1001.50,572.68 L1002.00,573.61 L1002.50,573.40 L1003.00,571.95 L1003.50,569.53 L1004.00,566.67 L1004.50,564.00 L1005.00,562.14 L1005.50,561.58 L1006.00,562.56 L1006.50,565.03 L1007.00,568.59 L1007.50,572.57 L1008.00,576.07 L1008.50,578.12 L1009.00,577.81 L1009.50,574.43 L1010.00,560.68 L1010.50,544.56 L1011.00,528.44 L1011.50,512.32 L1012.00,496.20 L1012.50,480.08 L1013.00,463.96 L1013.50,451.58 L1014.00,448.60 L1014.50,448.62 L1015.00,450.90 L1015.50,454.51 L1016.00,458.48 L1016.50,461.94 L1017.00,464.24 L1017.50,465.03 L1018.00,464.29 L1018.50,462.30 L1019.00,459.58 L1019.50,456.74 L1020.00,454.42 L1020.50,453.10 L1021.00,453.03 L1021.50,453.96 L1022.00,455.69 L1022.50,457.97 L1023.00,460.42 L1023.50,462.65 L1024.00,464.29 L1024.50,465.02 L1025.00,464.64 L1025.50,463.14 L1026.00,460.65 L1026.50,457.48 L1027.00,454.09 L1027.50,451.03 L1028.00,448.91 L1028.50,448.31 L1029.00,449.72 L1029.50,453.74 L1030.00,467.47 L1030.50,481.20 L1031.00,494.93 L1031.50,508.66 L1032.00,522.39 L1032.50,536.12 L1033.00,549.85 L1033.50,563.58 L1034.00,574.59 L1034.50,577.58 L1035.00,578.30 L1035.50,577.15 L1036.00,574.65 L1036.50,571.42 L1037.00,568.04 L1037.50,565.05 L1038.00,562.85 L1038.50,561.71 L1039.00,561.71 L1039.50,562.76 L1040.00,564.62 L1040.50,566.97 L1041.00,569.41 L1041.50,571.54 L1042.00,573.04 L1042.50,573.67 L1043.00,573.27 L1043.50,571.79 L1044.00,569.52 L1044.50,566.86 L1045.00,564.33 L1045.50,562.43 L1046.00,561.59 L1046.50,562.04 L1047.00,563.84 L1047.50,566.76 L1048.00,570.36 L1048.50,573.99 L1049.00,576.89 L1049.50,578.29 L1050.00,577.47 L1050.50,573.92 L1051.00,560.26 L1051.50,545.26 L1052.00,530.27 L1052.50,515.27 L1053.00,500.28 L1053.50,485.28 L1054.00,470.29 L1054.50,455.30 L1055.00,449.78 L1055.50,448.29 L1056.00,449.16 L1056.50,451.74 L1057.00,455.26 L1057.50,458.93 L1058.00,462.08 L1058.50,464.21 L1059.00,465.03 L1059.50,464.51 L1060.00,462.85 L1060.50,460.44 L1061.00,457.76 L1061.50,455.34 L1062.00,453.62 L1062.50,452.93 L1063.00,453.33 L1063.50,454.69 L1064.00,456.78 L1064.50,459.27 L1065.00,461.72 L1065.50,463.71 L1066.00,464.86 L1066.50,464.91 L1067.00,463.74 L1067.50,461.47 L1068.00,458.35 L1068.50,454.87 L1069.00,451.59 L1069.50,449.18 L1070.00,448.28 L1070.50,449.45 L1071.00,453.11 L1071.50,466.76 L1072.00,480.90 L1072.50,495.04 L1073.00,509.18 L1073.50,523.32 L1074.00,537.47 L1074.50,551.61 L1075.00,565.75 L1075.50,575.34 L1076.00,577.92 L1076.50,578.17 L1077.00,576.56 L1077.50,573.71 L1078.00,570.27 L1078.50,566.87 L1079.00,564.06 L1079.50,562.23 L1080.00,561.57 L1080.50,562.10 L1081.00,563.64 L1081.50,565.87 L1082.00,568.39 L1082.50,570.76 L1083.00,572.59 L1083.50,573.56 L1084.00,573.52 L1084.50,572.39 L1085.00,570.37 L1085.50,567.81 L1086.00,565.20 L1086.50,563.03 L1087.00,561.76 L1087.50,561.70 L1088.00,562.97 L1088.50,565.46 L1089.00,568.81 L1089.50,572.48 L1090.00,575.76 L1090.50,577.90 L1091.00,578.16 L1091.50,575.94 L1092.00,567.38 L1092.50,552.53 L1093.00,537.67 L1093.50,522.82 L1094.00,507.97 L1094.50,493.12 L1095.00,478.26 L1095.50,463.41 L1096.00,451.79 L1096.50,448.80 L1097.00,448.41 L1097.50,450.08 L1098.00,453.12 L1098.50,456.76 L1099.00,460.26 L1099.50,463.04 L1100.00,464.67 L1100.50,464.99 L1101.00,464.03 L1101.50,462.08 L1102.00,459.54 L1102.50,456.92 L1103.00,454.70 L1103.50,453.29 L1104.00,452.94 L1104.50,453.63 L1105.00,455.20 L1105.50,457.41 L1106.00,459.90 L1106.50,462.25 L1107.00,464.06 L1107.50,464.97 L1108.00,464.77 L1108.50,463.39 L1109.00,460.96 L1109.50,457.78 L1110.00,454.32 L1110.50,451.17 L1111.00,448.96 L1111.50,448.30 L1112.00,449.72 L1112.50,453.99 L1113.00,467.96 L1113.50,481.93 L1114.00,495.91 L1114.50,509.88 L1115.00,523.86 L1115.50,537.83 L1116.00,551.81 L1116.50,565.78 L1117.00,575.30 L1117.50,577.89 L1118.00,578.19 L1118.50,576.67 L1119.00,573.89 L1119.50,570.51 L1120.00,567.13 L1120.50,564.28 L1121.00,562.36 L1121.50,561.58 L1122.00,561.97 L1122.50,563.37 L1123.00,565.51 L1123.50,567.98 L1124.00,570.38 L1124.50,572.30 L1125.00,573.45 L1125.50,573.59 L1126.00,572.18 L1126.50,569.44 L1127.00,566.14 L1127.50,563.25 L1128.00,561.68 L1128.50,562.03 L1129.00,564.43 L1129.50,568.41 L1130.00,572.98 L1130.50,576.78 L1131.00,578.32 L1131.50,576.30 L1132.00,565.17 L1132.50,546.57 L1133.00,527.98 L1133.50,509.38 L1134.00,490.78 L1134.50,472.19 L1135.00,453.59 L1135.50,448.95 L1136.00,448.56 L1136.50,451.23 L1137.00,455.53 L1137.50,460.01 L1138.00,463.41 L1138.50,464.97 L1139.00,464.47 L1139.50,462.24 L1140.00,459.06 L1140.50,455.89 L1141.00,453.63 L1141.50,452.93 L1142.00,453.87 L1142.50,456.14 L1143.00,459.17 L1143.50,462.17 L1144.00,464.34 L1144.50,465.02 L1145.00,463.87 L1145.50,460.99 L1146.00,456.94 L1146.50,452.66 L1147.00,449.37 L1147.50,448.30 L1148.00,450.52 L1148.50,461.36 L1149.00,478.92 L1149.50,496.48 L1150.00,514.04 L1150.50,531.60 L1151.00,549.16 L1151.50,566.72 L1152.00,576.41 L1152.50,578.32 L1153.00,577.02 L1153.50,573.60 L1154.00,569.30 L1154.50,565.31 L1155.00,562.56 L1155.50,561.57 L1156.00,562.39 L1156.50,564.66 L1157.00,567.70 L1157.50,570.69 L1158.00,572.87 L1158.50,573.68 L1159.00,572.91 L1159.50,570.75 L1160.00,567.74 L1160.50,564.68 L1161.00,562.39 L1161.50,561.57 L1162.00,562.60 L1162.50,565.40 L1163.00,569.44 L1163.50,573.75 L1164.00,577.14 L1164.50,578.31 L1165.00,576.17 L1165.50,565.50 L1166.00,547.81 L1166.50,530.12 L1167.00,512.43 L1167.50,494.74 L1168.00,477.05 L1168.50,459.36 L1169.00,450.05 L1169.50,448.28 L1170.00,449.72 L1170.50,453.25 L1171.00,457.59 L1171.50,461.54 L1172.00,464.19 L1172.50,465.03 L1173.00,464.05 L1173.50,461.64 L1174.00,458.55 L1174.50,455.59 L1175.00,453.55 L1175.50,452.93 L1176.00,453.49 L1176.50,454.90 L1177.00,456.94 L1177.50,459.30 L1178.00,461.63 L1178.50,463.56 L1179.00,464.76 L1179.50,464.99 L1180.00,464.13 L1180.50,462.23 L1181.00,459.49 L1181.50,456.25 L1182.00,452.98 L1182.50,450.23 L1183.00,448.55 L1183.50,448.47 L1184.00,450.43 L1184.50,456.84 L1185.00,470.25 L1185.50,483.67 L1186.00,497.09 L1186.50,510.51 L1187.00,523.93 L1187.50,537.35 L1188.00,550.76 L1188.50,564.18 L1189.00,574.68 L1189.50,577.58 L1190.00,578.31 L1190.50,577.24 L1191.00,574.86 L1191.50,571.73 L1192.00,568.42 L1192.50,565.42 L1193.00,563.14 L1193.50,561.83 L1194.00,561.62 L1194.50,562.43 L1195.00,564.09 L1195.50,566.30 L1196.00,568.70 L1196.50,570.91 L1197.00,572.61 L1197.50,573.55 L1198.00,573.47 L1198.50,571.70 L1199.00,568.63 L1199.50,565.21 L1200.00,562.55 L1200.50,561.57 L1201.00,562.79 L1201.50,566.09 L1202.00,570.68 L1202.50,575.21 L1203.00,578.04 L1203.50,577.56 L1204.00,571.50 L1204.50,552.14 L1205.00,532.78 L1205.50,513.42 L1206.00,494.06 L1206.50,474.71 L1207.00,455.35 L1207.50,449.08 L1208.00,448.54 L1208.50,451.34 L1209.00,455.86 L1209.50,460.45 L1210.00,463.78 L1210.50,465.03 L1211.00,464.08 L1211.50,461.43 L1212.00,458.01 L1212.50,454.93 L1213.00,453.14 L1213.50,453.06 L1214.00,454.12 L1214.50,456.02 L1215.00,458.46 L1215.50,461.00 L1216.00,463.21 L1216.50,464.65 L1217.00,465.01 L1217.50,464.13 L1218.00,462.07 L1218.50,459.06 L1219.00,455.55 L1219.50,452.14 L1220.00,449.49 L1220.50,448.29 L1221.00,449.15 L1221.50,452.53 L1222.00,465.26 L1222.50,479.62 L1223.00,493.98 L1223.50,508.33 L1224.00,522.69 L1224.50,537.05 L1225.00,551.40 L1225.50,565.76 L1226.00,575.40 L1226.50,577.96 L1227.00,578.13 L1227.50,576.42 L1228.00,573.46 L1228.50,569.94 L1229.00,566.53 L1229.50,563.78 L1230.00,562.06 L1230.50,561.57 L1231.00,562.29 L1231.50,564.01 L1232.00,566.36 L1232.50,568.93 L1233.00,571.24 L1233.50,572.91 L1234.00,573.65 L1234.50,573.42 L1235.00,572.37 L1235.50,570.67 L1236.00,568.53 L1236.50,566.25 L1237.00,564.14 L1237.50,562.53 L1238.00,561.66 L1238.50,561.72 L1239.00,562.76 L1239.50,564.73 L1240.00,567.42 L1240.50,570.52 L1241.00,573.62 L1241.50,576.27 L1242.00,577.95 L1242.50,578.23 L1243.00,576.72 L1243.50,573.00 L1244.00,560.23 L1244.50,547.47 L1245.00,534.70 L1245.50,521.94 L1246.00,509.17 L1246.50,496.40 L1247.00,483.64 L1247.50,470.87 L1248.00,458.11 L1248.50,450.90 L1249.00,448.68 L1249.50,448.36 L1250.00,449.60 L1250.50,451.96 L1251.00,454.96 L1251.50,458.12 L1252.00,460.99 L1252.50,463.24 L1253.00,464.62 L1253.50,465.03 L1254.00,464.47 L1254.50,463.10 L1255.00,461.13 L1255.50,458.88 L1256.00,456.65 L1256.50,454.76 L1257.00,453.46 L1257.50,452.93 L1258.00,453.35 L1258.50,454.86 L1259.00,457.18 L1259.50,459.87 L1260.00,462.40 L1260.50,464.26 L1261.00,465.03 L1261.50,464.45 L1262.00,462.52 L1262.50,459.47 L1263.00,455.80 L1263.50,452.19 L1264.00,449.41 L1264.50,448.28 L1265.00,449.49 L1265.50,453.82 L1266.00,468.96 L1266.50,484.10 L1267.00,499.24 L1267.50,514.38 L1268.00,529.51 L1268.50,544.65 L1269.00,559.79 L1269.50,573.82 L1270.00,577.45 L1270.50,578.29 L1271.00,576.88 L1271.50,573.93 L1272.00,570.26 L1272.50,566.64 L1273.00,563.73 L1273.50,561.98 L1274.00,561.60 L1274.50,562.54 L1275.00,564.53 L1275.50,567.11 L1276.00,569.78 L1276.50,572.01 L1277.00,573.38 L1277.50,573.63 L1278.00,572.65 L1278.50,570.61 L1279.00,567.93 L1279.50,565.16 L1280.00,562.90 L1280.50,561.68 L1281.00,561.85 L1281.50,563.50 L1282.00,566.44" fill="none" stroke="#705525" stroke-width="1.6" stroke-linejoin="round"/><path d="M5,438.8 L13.2,438.8 L9.1,446.7 Z" fill="#5a5390"/><path d="M12.2,587 L19.8,587 L16,580 Z" fill="#5a5390"/><circle cx="314.2" cy="422.1" r="4.6" fill="#5a5390"/></svg>
<div style="position:absolute;left:100.20px;top:569.46px;font-size:8.2px;line-height:8.2px;color:#2a2a2a;font-weight:400;white-space:nowrap;font-family:'Liberation Sans', sans-serif;">66.7min</div>
<div style="position:absolute;left:241.13px;top:569.46px;font-size:8.2px;line-height:8.2px;color:#2a2a2a;font-weight:400;white-space:nowrap;font-family:'Liberation Sans', sans-serif;">83.3min</div>
<div style="position:absolute;left:1025.06px;top:569.46px;font-size:8.2px;line-height:8.2px;color:#2a2a2a;font-weight:400;white-space:nowrap;font-family:'Liberation Sans', sans-serif;">100.0min</div>
<div style="position:absolute;left:1166.00px;top:569.46px;font-size:8.2px;line-height:8.2px;color:#2a2a2a;font-weight:400;white-space:nowrap;font-family:'Liberation Sans', sans-serif;">116.7min</div>
<div style="position:absolute;left:12.00px;top:436.47px;font-size:9.6px;line-height:9.6px;color:#777;font-weight:400;white-space:nowrap;font-family:'Liberation Sans', sans-serif;">0</div>
<div style="position:absolute;left:6.00px;top:581.67px;font-size:9.6px;line-height:9.6px;color:#777;font-weight:400;white-space:nowrap;font-family:'Liberation Sans', sans-serif;">0</div>
<div style="position:absolute;left:321.50px;top:415.55px;font-size:16.6px;line-height:16.6px;color:#bdbdbd;font-weight:400;white-space:nowrap;font-family:'Liberation Sans', sans-serif;-webkit-text-stroke:0.3px #bdbdbd">4.120</div>
<div style="position:absolute;left:974px;top:405px;width:100px;height:30px;overflow:hidden"><div style="position:absolute;right:52.00px;top:9.85px;font-size:16.6px;line-height:16.6px;color:#9a9a9a;white-space:nowrap;-webkit-text-stroke:0.3px #9a9a9a">54598</div></div>
<div style="position:absolute;left:329px;top:63px;width:644px;height:213px;background:#292929;"></div>
<div style="position:absolute;left:329px;top:63px;width:1px;height:213px;background:#303030;"></div>
<div style="position:absolute;left:972px;top:63px;width:1px;height:213px;background:#333333;"></div>
<div style="position:absolute;left:336.70px;top:70.34px;font-size:12px;line-height:12px;color:#8e8e8e;font-weight:400;white-space:nowrap;font-family:'Liberation Sans', sans-serif;">voltage</div>
<svg style="position:absolute;left:378.5px;top:69.6px" width="10" height="13" viewBox="0 0 10 13"><path d="M8.2,0.4 L0.6,6.9 L4.1,6.9 L0.9,12 L8.8,5.5 L5.1,5.5 Z" fill="#eeb52a" stroke="#e0a020" stroke-width="0.5" stroke-linejoin="round"/><path d="M6.6,2.2 L3.2,5.4 L5.6,5.4 Z" fill="#f8dc70"/></svg>
<div style="position:absolute;left:334.10px;top:112.27px;font-size:9.6px;line-height:9.6px;color:#bdbdbd;font-weight:400;white-space:nowrap;font-family:'Liberation Sans', sans-serif;text-shadow:0 0 2px #000">10.0</div>
<div style="position:absolute;left:333.50px;top:262.47px;font-size:9.6px;line-height:9.6px;color:#bdbdbd;font-weight:400;white-space:nowrap;font-family:'Liberation Sans', sans-serif;text-shadow:0 0 2px #000">-10.0</div>
<svg style="position:absolute;left:0;top:0" width="1300" height="280"><path d="M333.5,123.5 V257 M423.5,123.5 V257 M565.5,123.5 V257 M706.5,123.5 V257 M847.5,123.5 V257 " stroke="#3a3a3a" stroke-width="1"/><path d="M333.94,172.72 L334.49,172.72 L335.65,156.94 L336.20,156.94 L337.49,142.77 L338.04,142.77 L339.37,132.22 L339.92,132.22 L341.39,126.39 L341.94,126.39 L343.22,126.39 L343.77,126.39 L345.23,131.39 L345.78,131.39 L346.38,136.41 L346.93,136.41 L347.94,145.54 L348.49,145.54 L349.97,160.54 L350.52,160.54 L351.71,175.47 L352.26,175.47 L353.70,193.58 L354.25,193.58 L354.93,204.80 L355.48,204.80 L356.50,218.51 L357.05,218.51 L357.85,229.33 L358.40,229.33 L359.50,240.55 L360.05,240.55 L361.17,249.30 L361.72,249.30 L362.30,253.45 L362.85,253.45 L363.63,256.32 L364.18,256.32 L365.02,256.88 L365.57,256.88 L367.02,251.91 L367.57,251.91 L368.87,241.22 L369.42,241.22 L370.14,231.02 L370.69,231.02 L372.03,212.77 L372.58,212.77 L373.28,199.33 L373.83,199.33 L375.00,180.53 L375.55,180.53 L376.24,167.36 L376.79,167.36 L377.36,156.35 L377.91,156.35 L379.32,140.33 L379.87,140.33 L380.64,132.52 L381.19,132.52 L381.96,127.58 L382.51,127.58 L384.03,126.20 L384.58,126.20 L385.98,131.86 L386.53,131.86 L387.38,139.71 L387.93,139.71 L389.42,155.94 L389.97,155.94 L391.06,171.92 L391.61,171.92 L392.83,190.75 L393.38,190.75 L394.15,204.87 L394.70,204.87 L396.17,225.13 L396.72,225.13 L397.96,239.97 L398.51,239.97 L400.00,251.82 L400.55,251.82 L401.98,256.82 L402.53,256.82 L403.39,256.26 L403.94,256.26 L404.86,252.27 L405.41,252.27 L406.13,246.12 L406.68,246.12 L407.39,237.90 L407.94,237.90 L408.58,228.51 L409.13,228.51 L409.99,215.66 L410.54,215.66 L411.69,198.65 L412.24,198.65 L412.81,187.04 L413.36,187.04 L414.58,169.15 L415.13,169.15 L416.02,155.78 L416.57,155.78 L417.44,144.45 L417.99,144.45 L419.35,132.98 L419.90,132.98 L420.93,127.42 L421.48,127.42 L422.35,125.80 L422.90,125.80 L423.93,127.47 L424.48,127.47 L425.73,133.25 L426.28,133.25 L426.90,139.10 L427.45,139.10 L428.96,152.70 L429.51,152.70 L430.10,161.75 L430.65,161.75 L431.94,177.87 L432.49,177.87 L433.87,195.75 L434.42,195.75 L435.01,206.21 L435.56,206.21 L436.89,222.51 L437.44,222.51 L438.36,233.81 L438.91,233.81 L440.03,244.41 L440.58,244.41 L441.16,249.89 L441.71,249.89 L442.33,253.98 L442.88,253.98 L443.62,256.52 L444.17,256.52 L445.66,256.04 L446.21,256.04 L446.97,252.79 L447.52,252.79 L448.81,244.53 L449.36,244.53 L450.83,231.27 L451.38,231.27 L452.85,214.57 L453.40,214.57 L454.30,201.29 L454.85,201.29 L455.76,187.50 L456.31,187.50 L457.38,172.39 L457.93,172.39 L459.25,156.37 L459.80,156.37 L460.47,147.16 L461.02,147.16 L462.31,136.00 L462.86,136.00 L464.20,128.59 L464.75,128.59 L466.14,125.80 L466.69,125.80 L467.30,127.19 L467.85,127.19 L469.32,137.11 L469.87,137.11 L470.53,147.04 L471.08,147.04 L471.98,162.01 L472.53,162.01 L473.69,182.47 L474.24,182.47 L475.69,207.51 L476.24,207.51 L477.13,224.34 L477.68,224.34 L479.14,243.27 L479.69,243.27 L480.78,253.18 L481.33,253.18 L482.20,256.84 L482.75,256.84 L483.63,256.00 L484.18,256.00 L484.92,252.12 L485.47,252.12 L486.11,246.07 L486.66,246.07 L487.38,237.37 L487.93,237.37 L489.16,221.82 L489.71,221.82 L491.24,200.50 L491.79,200.50 L492.51,186.71 L493.06,186.71 L493.68,174.27 L494.23,174.27 L495.74,154.05 L496.29,154.05 L497.38,141.03 L497.93,141.03 L498.89,132.22 L499.44,132.22 L500.23,127.43 L500.78,127.43 L501.92,125.92 L502.47,125.92 L503.84,130.84 L504.39,130.84 L505.39,139.87 L505.94,139.87 L506.92,152.41 L507.47,152.41 L508.09,164.00 L508.64,164.00 L510.09,186.11 L510.64,186.11 L511.24,199.32 L511.79,199.32 L512.84,216.96 L513.39,216.96 L514.76,235.50 L515.31,235.50 L516.01,244.97 L516.56,244.97 L517.83,254.15 L518.38,254.15 L519.86,256.93 L520.41,256.93 L521.59,254.47 L522.14,254.47 L523.46,247.93 L524.01,247.93 L524.69,241.69 L525.24,241.69 L526.22,231.94 L526.77,231.94 L527.49,222.60 L528.04,222.60 L529.42,206.68 L529.97,206.68 L530.82,194.40 L531.37,194.40 L532.38,180.68 L532.93,180.68 L534.45,163.18 L535.00,163.18 L536.39,148.82 L536.94,148.82 L538.45,136.78 L539.00,136.78 L540.01,130.41 L540.56,130.41 L541.59,126.66 L542.14,126.66 L543.41,126.20 L543.96,126.20 L544.99,130.87 L545.54,130.87 L546.39,139.10 L546.94,139.10 L547.90,151.66 L548.45,151.66 L549.16,164.44 L549.71,164.44 L550.64,181.18 L551.19,181.18 L552.71,205.49 L553.26,205.49 L554.75,227.60 L555.30,227.60 L556.48,242.58 L557.03,242.58 L558.08,252.14 L558.63,252.14 L559.52,256.47 L560.07,256.47 L560.73,256.81 L561.28,256.81 L562.11,254.32 L562.66,254.32 L563.98,246.55 L564.53,246.55 L565.93,233.70 L566.48,233.70 L567.40,221.53 L567.95,221.53 L569.27,203.88 L569.82,203.88 L571.14,185.33 L571.69,185.33 L572.92,167.98 L573.47,167.98 L574.68,152.59 L575.23,152.59 L576.53,139.41 L577.08,139.41 L578.00,131.82 L578.55,131.82 L579.79,126.62 L580.34,126.62 L581.18,125.88 L581.73,125.88 L582.77,128.33 L583.32,128.33 L584.63,135.32 L585.18,135.32 L586.41,145.77 L586.96,145.77 L587.82,156.11 L588.37,156.11 L589.84,173.47 L590.39,173.47 L591.59,189.67 L592.14,189.67 L593.26,205.36 L593.81,205.36 L594.40,215.54 L594.95,215.54 L596.04,229.15 L596.59,229.15 L597.40,238.84 L597.95,238.84 L599.17,248.69 L599.72,248.69 L600.73,254.37 L601.28,254.37 L602.63,257.00 L603.18,257.00 L604.38,255.55 L604.93,255.55 L606.26,250.47 L606.81,250.47 L607.72,244.25 L608.27,244.25 L609.45,234.49 L610.00,234.49 L611.28,221.99 L611.83,221.99 L613.20,207.15 L613.75,207.15 L614.65,195.21 L615.20,195.21 L616.58,179.25 L617.13,179.25 L618.54,163.82 L619.09,163.82 L620.32,151.21 L620.87,151.21 L622.38,139.21 L622.93,139.21 L624.41,130.79 L624.96,130.79 L626.03,126.95 L626.58,126.95 L627.66,125.82 L628.21,125.82 L628.94,127.71 L629.49,127.71 L630.86,136.11 L631.41,136.11 L632.88,151.20 L633.43,151.20 L634.46,166.35 L635.01,166.35 L636.24,185.57 L636.79,185.57 L638.05,205.62 L638.60,205.62 L639.88,224.43 L640.43,224.43 L641.16,235.91 L641.71,235.91 L643.03,248.72 L643.58,248.72 L644.71,255.37 L645.26,255.37 L646.47,256.85 L647.02,256.85 L647.99,254.03 L648.54,254.03 L649.71,246.78 L650.26,246.78 L651.57,234.62 L652.12,234.62 L653.30,220.15 L653.85,220.15 L655.12,202.87 L655.67,202.87 L656.26,191.39 L656.81,191.39 L657.54,178.65 L658.09,178.65 L659.08,163.91 L659.63,163.91 L660.82,149.14 L661.37,149.14 L662.15,139.85 L662.70,139.85 L663.93,130.83 L664.48,130.83 L665.66,126.35 L666.21,126.35 L666.82,125.88 L667.37,125.88 L668.39,128.54 L668.94,128.54 L669.73,133.68 L670.28,133.68 L670.90,140.18 L671.45,140.18 L672.15,148.92 L672.70,148.92 L673.57,160.77 L674.12,160.77 L674.87,172.81 L675.42,172.81 L676.17,185.70 L676.72,185.70 L677.33,197.30 L677.88,197.30 L678.89,212.68 L679.44,212.68 L680.38,226.14 L680.93,226.14 L682.09,239.37 L682.64,239.37 L683.77,249.22 L684.32,249.22 L685.12,254.35 L685.67,254.35 L687.11,256.98 L687.66,256.98 L688.23,255.55 L688.78,255.55 L689.74,250.04 L690.29,250.04 L691.13,241.62 L691.68,241.62 L692.64,229.34 L693.19,229.34 L693.87,217.51 L694.42,217.51 L695.79,197.03 L696.34,197.03 L697.27,180.73 L697.82,180.73 L698.42,168.41 L698.97,168.41 L700.13,151.90 L700.68,151.90 L701.34,142.10 L701.89,142.10 L702.98,132.14 L703.53,132.14 L704.43,127.10 L704.98,127.10 L706.11,125.96 L706.66,125.96 L708.15,130.09 L708.70,130.09 L710.05,138.68 L710.60,138.68 L711.58,148.40 L712.13,148.40 L713.48,163.35 L714.03,163.35 L715.21,178.85 L715.76,178.85 L716.69,192.66 L717.24,192.66 L717.94,204.41 L718.49,204.41 L719.64,219.50 L720.19,219.50 L721.30,232.71 L721.85,232.71 L723.34,245.66 L723.89,245.66 L725.39,254.02 L725.94,254.02 L727.09,256.89 L727.64,256.89 L728.55,256.11 L729.10,256.11 L730.52,249.72 L731.07,249.72 L731.65,243.58 L732.20,243.58 L732.87,235.03 L733.42,235.03 L734.53,220.93 L735.08,220.93 L736.24,204.35 L736.79,204.35 L737.50,191.52 L738.05,191.52 L739.22,174.00 L739.77,174.00 L741.20,155.54 L741.75,155.54 L742.68,143.86 L743.23,143.86 L744.21,134.46 L744.76,134.46 L745.55,128.93 L746.10,128.93 L746.95,126.07 L747.50,126.07 L749.00,127.36 L749.55,127.36 L750.49,131.99 L751.04,131.99 L752.53,142.96 L753.08,142.96 L754.53,157.94 L755.08,157.94 L756.22,172.95 L756.77,172.95 L757.59,185.99 L758.14,185.99 L759.65,205.87 L760.20,205.87 L761.25,220.43 L761.80,220.43 L762.77,232.81 L763.32,232.81 L764.19,242.54 L764.74,242.54 L766.26,252.53 L766.81,252.53 L767.85,256.39 L768.40,256.39 L769.25,256.82 L769.80,256.82 L770.82,253.69 L771.37,253.69 L772.06,248.61 L772.61,248.61 L773.78,238.14 L774.33,238.14 L775.32,225.85 L775.87,225.85 L776.72,212.98 L777.27,212.98 L778.59,194.33 L779.14,194.33 L780.51,175.00 L781.06,175.00 L781.64,164.14 L782.19,164.14 L783.27,150.05 L783.82,150.05 L784.65,140.15 L785.20,140.15 L786.67,130.02 L787.22,130.02 L788.54,125.96 L789.09,125.96 L789.90,126.37 L790.45,126.37 L791.28,129.41 L791.83,129.41 L792.54,134.44 L793.09,134.44 L794.61,146.71 L795.16,146.71 L796.02,157.41 L796.57,157.41 L797.72,172.28 L798.27,172.28 L799.29,187.11 L799.84,187.11 L801.03,203.71 L801.58,203.71 L802.73,219.17 L803.28,219.17 L804.57,233.92 L805.12,233.92 L805.80,242.18 L806.35,242.18 L807.65,251.43 L808.20,251.43 L809.06,255.57 L809.61,255.57 L810.69,256.95 L811.24,256.95 L812.13,253.68 L812.68,253.68 L813.54,245.81 L814.09,245.81 L815.17,231.69 L815.72,231.69 L816.73,214.31 L817.28,214.31 L818.20,196.09 L818.75,196.09 L820.04,172.93 L820.59,172.93 L821.72,153.63 L822.27,153.63 L822.88,142.64 L823.43,142.64 L824.24,132.85 L824.79,132.85 L825.80,126.69 L826.35,126.69 L827.80,127.26 L828.35,127.26 L829.77,136.30 L830.32,136.30 L831.41,149.38 L831.96,149.38 L832.55,160.70 L833.10,160.70 L834.41,181.98 L834.96,181.98 L835.95,200.36 L836.50,200.36 L837.62,219.58 L838.17,219.58 L839.42,237.28 L839.97,237.28 L841.14,249.61 L841.69,249.61 L842.73,255.84 L843.28,255.84 L844.72,255.95 L845.27,255.95 L846.21,250.33 L846.76,250.33 L847.71,240.21 L848.26,240.21 L849.65,221.73 L850.20,221.73 L850.96,206.90 L851.51,206.90 L852.36,190.00 L852.91,190.00 L854.28,167.31 L854.83,167.31 L855.46,154.63 L856.01,154.63 L857.38,138.01 L857.93,138.01 L859.17,128.53 L859.72,128.53 L860.71,125.80 L861.26,125.80 L862.10,127.00 L862.65,127.00 L863.97,132.44 L864.52,132.44 L865.96,142.68 L866.51,142.68 L867.22,151.15 L867.77,151.15 L868.80,163.52 L869.35,163.52 L870.45,177.86 L871.00,177.86 L872.04,192.47 L872.59,192.47 L873.48,205.59 L874.03,205.59 L874.75,216.70 L875.30,216.70 L876.43,230.16 L876.98,230.16 L878.33,242.73 L878.88,242.73 L879.52,248.78 L880.07,248.78 L880.86,253.72 L881.41,253.72 L882.76,256.92 L883.31,256.92 L884.65,253.91 L885.20,253.91 L886.40,243.06 L886.95,243.06 L887.55,232.40 L888.10,232.40 L889.36,211.28 L889.91,211.28 L891.42,184.26 L891.97,184.26 L893.50,158.25 L894.05,158.25 L895.29,140.31 L895.84,140.31 L896.46,132.10 L897.01,132.10 L898.39,125.89 L898.94,125.89 L899.72,126.66 L900.27,126.66 L901.46,131.58 L902.01,131.58 L903.49,142.44 L904.04,142.44 L905.30,155.91 L905.85,155.91 L906.54,166.82 L907.09,166.82 L907.95,180.06 L908.50,180.06 L909.95,199.69 L910.50,199.69 L911.21,211.81 L911.76,211.81 L912.92,226.94 L913.47,226.94 L914.43,238.48 L914.98,238.48 L915.71,246.31 L916.26,246.31 L917.43,253.65 L917.98,253.65 L918.59,256.30 L919.14,256.30 L919.81,256.96 L920.36,256.96 L921.30,255.26 L921.85,255.26 L922.48,252.08 L923.03,252.08 L923.66,247.44 L924.21,247.44 L925.33,238.50 L925.88,238.50 L927.17,226.03 L927.72,226.03 L929.13,210.41 L929.68,210.41 L930.38,199.73 L930.93,199.73 L931.91,186.32 L932.46,186.32 L933.33,174.07 L933.88,174.07 L935.03,160.30 L935.58,160.30 L936.62,148.83 L937.17,148.83 L938.64,137.07 L939.19,137.07 L940.12,130.91 L940.67,130.91 L941.29,127.69 L941.84,127.69 L943.08,125.80 L943.63,125.80 L944.35,127.08 L944.90,127.08 L946.07,132.95 L946.62,132.95 L947.68,142.32 L948.23,142.32 L949.67,158.26 L950.22,158.26 L951.33,174.04 L951.88,174.04 L953.04,191.65 L953.59,191.65 L954.42,205.79 L954.97,205.79 L956.06,221.83 L956.61,221.83 L957.43,233.57 L957.98,233.57 L959.27,246.23 L959.82,246.23 L960.89,253.56 L961.44,253.56 L962.13,256.47 L962.68,256.47 L963.48,256.74 L964.03,256.74 L964.96,253.42 L965.51,253.42 L966.78,244.30 L967.33,244.30" fill="none" stroke="#111" stroke-width="3.6" stroke-linejoin="round" opacity="0.75"/><path d="M333.94,172.72 L334.49,172.72 L335.65,156.94 L336.20,156.94 L337.49,142.77 L338.04,142.77 L339.37,132.22 L339.92,132.22 L341.39,126.39 L341.94,126.39 L343.22,126.39 L343.77,126.39 L345.23,131.39 L345.78,131.39 L346.38,136.41 L346.93,136.41 L347.94,145.54 L348.49,145.54 L349.97,160.54 L350.52,160.54 L351.71,175.47 L352.26,175.47 L353.70,193.58 L354.25,193.58 L354.93,204.80 L355.48,204.80 L356.50,218.51 L357.05,218.51 L357.85,229.33 L358.40,229.33 L359.50,240.55 L360.05,240.55 L361.17,249.30 L361.72,249.30 L362.30,253.45 L362.85,253.45 L363.63,256.32 L364.18,256.32 L365.02,256.88 L365.57,256.88 L367.02,251.91 L367.57,251.91 L368.87,241.22 L369.42,241.22 L370.14,231.02 L370.69,231.02 L372.03,212.77 L372.58,212.77 L373.28,199.33 L373.83,199.33 L375.00,180.53 L375.55,180.53 L376.24,167.36 L376.79,167.36 L377.36,156.35 L377.91,156.35 L379.32,140.33 L379.87,140.33 L380.64,132.52 L381.19,132.52 L381.96,127.58 L382.51,127.58 L384.03,126.20 L384.58,126.20 L385.98,131.86 L386.53,131.86 L387.38,139.71 L387.93,139.71 L389.42,155.94 L389.97,155.94 L391.06,171.92 L391.61,171.92 L392.83,190.75 L393.38,190.75 L394.15,204.87 L394.70,204.87 L396.17,225.13 L396.72,225.13 L397.96,239.97 L398.51,239.97 L400.00,251.82 L400.55,251.82 L401.98,256.82 L402.53,256.82 L403.39,256.26 L403.94,256.26 L404.86,252.27 L405.41,252.27 L406.13,246.12 L406.68,246.12 L407.39,237.90 L407.94,237.90 L408.58,228.51 L409.13,228.51 L409.99,215.66 L410.54,215.66 L411.69,198.65 L412.24,198.65 L412.81,187.04 L413.36,187.04 L414.58,169.15 L415.13,169.15 L416.02,155.78 L416.57,155.78 L417.44,144.45 L417.99,144.45 L419.35,132.98 L419.90,132.98 L420.93,127.42 L421.48,127.42 L422.35,125.80 L422.90,125.80 L423.93,127.47 L424.48,127.47 L425.73,133.25 L426.28,133.25 L426.90,139.10 L427.45,139.10 L428.96,152.70 L429.51,152.70 L430.10,161.75 L430.65,161.75 L431.94,177.87 L432.49,177.87 L433.87,195.75 L434.42,195.75 L435.01,206.21 L435.56,206.21 L436.89,222.51 L437.44,222.51 L438.36,233.81 L438.91,233.81 L440.03,244.41 L440.58,244.41 L441.16,249.89 L441.71,249.89 L442.33,253.98 L442.88,253.98 L443.62,256.52 L444.17,256.52 L445.66,256.04 L446.21,256.04 L446.97,252.79 L447.52,252.79 L448.81,244.53 L449.36,244.53 L450.83,231.27 L451.38,231.27 L452.85,214.57 L453.40,214.57 L454.30,201.29 L454.85,201.29 L455.76,187.50 L456.31,187.50 L457.38,172.39 L457.93,172.39 L459.25,156.37 L459.80,156.37 L460.47,147.16 L461.02,147.16 L462.31,136.00 L462.86,136.00 L464.20,128.59 L464.75,128.59 L466.14,125.80 L466.69,125.80 L467.30,127.19 L467.85,127.19 L469.32,137.11 L469.87,137.11 L470.53,147.04 L471.08,147.04 L471.98,162.01 L472.53,162.01 L473.69,182.47 L474.24,182.47 L475.69,207.51 L476.24,207.51 L477.13,224.34 L477.68,224.34 L479.14,243.27 L479.69,243.27 L480.78,253.18 L481.33,253.18 L482.20,256.84 L482.75,256.84 L483.63,256.00 L484.18,256.00 L484.92,252.12 L485.47,252.12 L486.11,246.07 L486.66,246.07 L487.38,237.37 L487.93,237.37 L489.16,221.82 L489.71,221.82 L491.24,200.50 L491.79,200.50 L492.51,186.71 L493.06,186.71 L493.68,174.27 L494.23,174.27 L495.74,154.05 L496.29,154.05 L497.38,141.03 L497.93,141.03 L498.89,132.22 L499.44,132.22 L500.23,127.43 L500.78,127.43 L501.92,125.92 L502.47,125.92 L503.84,130.84 L504.39,130.84 L505.39,139.87 L505.94,139.87 L506.92,152.41 L507.47,152.41 L508.09,164.00 L508.64,164.00 L510.09,186.11 L510.64,186.11 L511.24,199.32 L511.79,199.32 L512.84,216.96 L513.39,216.96 L514.76,235.50 L515.31,235.50 L516.01,244.97 L516.56,244.97 L517.83,254.15 L518.38,254.15 L519.86,256.93 L520.41,256.93 L521.59,254.47 L522.14,254.47 L523.46,247.93 L524.01,247.93 L524.69,241.69 L525.24,241.69 L526.22,231.94 L526.77,231.94 L527.49,222.60 L528.04,222.60 L529.42,206.68 L529.97,206.68 L530.82,194.40 L531.37,194.40 L532.38,180.68 L532.93,180.68 L534.45,163.18 L535.00,163.18 L536.39,148.82 L536.94,148.82 L538.45,136.78 L539.00,136.78 L540.01,130.41 L540.56,130.41 L541.59,126.66 L542.14,126.66 L543.41,126.20 L543.96,126.20 L544.99,130.87 L545.54,130.87 L546.39,139.10 L546.94,139.10 L547.90,151.66 L548.45,151.66 L549.16,164.44 L549.71,164.44 L550.64,181.18 L551.19,181.18 L552.71,205.49 L553.26,205.49 L554.75,227.60 L555.30,227.60 L556.48,242.58 L557.03,242.58 L558.08,252.14 L558.63,252.14 L559.52,256.47 L560.07,256.47 L560.73,256.81 L561.28,256.81 L562.11,254.32 L562.66,254.32 L563.98,246.55 L564.53,246.55 L565.93,233.70 L566.48,233.70 L567.40,221.53 L567.95,221.53 L569.27,203.88 L569.82,203.88 L571.14,185.33 L571.69,185.33 L572.92,167.98 L573.47,167.98 L574.68,152.59 L575.23,152.59 L576.53,139.41 L577.08,139.41 L578.00,131.82 L578.55,131.82 L579.79,126.62 L580.34,126.62 L581.18,125.88 L581.73,125.88 L582.77,128.33 L583.32,128.33 L584.63,135.32 L585.18,135.32 L586.41,145.77 L586.96,145.77 L587.82,156.11 L588.37,156.11 L589.84,173.47 L590.39,173.47 L591.59,189.67 L592.14,189.67 L593.26,205.36 L593.81,205.36 L594.40,215.54 L594.95,215.54 L596.04,229.15 L596.59,229.15 L597.40,238.84 L597.95,238.84 L599.17,248.69 L599.72,248.69 L600.73,254.37 L601.28,254.37 L602.63,257.00 L603.18,257.00 L604.38,255.55 L604.93,255.55 L606.26,250.47 L606.81,250.47 L607.72,244.25 L608.27,244.25 L609.45,234.49 L610.00,234.49 L611.28,221.99 L611.83,221.99 L613.20,207.15 L613.75,207.15 L614.65,195.21 L615.20,195.21 L616.58,179.25 L617.13,179.25 L618.54,163.82 L619.09,163.82 L620.32,151.21 L620.87,151.21 L622.38,139.21 L622.93,139.21 L624.41,130.79 L624.96,130.79 L626.03,126.95 L626.58,126.95 L627.66,125.82 L628.21,125.82 L628.94,127.71 L629.49,127.71 L630.86,136.11 L631.41,136.11 L632.88,151.20 L633.43,151.20 L634.46,166.35 L635.01,166.35 L636.24,185.57 L636.79,185.57 L638.05,205.62 L638.60,205.62 L639.88,224.43 L640.43,224.43 L641.16,235.91 L641.71,235.91 L643.03,248.72 L643.58,248.72 L644.71,255.37 L645.26,255.37 L646.47,256.85 L647.02,256.85 L647.99,254.03 L648.54,254.03 L649.71,246.78 L650.26,246.78 L651.57,234.62 L652.12,234.62 L653.30,220.15 L653.85,220.15 L655.12,202.87 L655.67,202.87 L656.26,191.39 L656.81,191.39 L657.54,178.65 L658.09,178.65 L659.08,163.91 L659.63,163.91 L660.82,149.14 L661.37,149.14 L662.15,139.85 L662.70,139.85 L663.93,130.83 L664.48,130.83 L665.66,126.35 L666.21,126.35 L666.82,125.88 L667.37,125.88 L668.39,128.54 L668.94,128.54 L669.73,133.68 L670.28,133.68 L670.90,140.18 L671.45,140.18 L672.15,148.92 L672.70,148.92 L673.57,160.77 L674.12,160.77 L674.87,172.81 L675.42,172.81 L676.17,185.70 L676.72,185.70 L677.33,197.30 L677.88,197.30 L678.89,212.68 L679.44,212.68 L680.38,226.14 L680.93,226.14 L682.09,239.37 L682.64,239.37 L683.77,249.22 L684.32,249.22 L685.12,254.35 L685.67,254.35 L687.11,256.98 L687.66,256.98 L688.23,255.55 L688.78,255.55 L689.74,250.04 L690.29,250.04 L691.13,241.62 L691.68,241.62 L692.64,229.34 L693.19,229.34 L693.87,217.51 L694.42,217.51 L695.79,197.03 L696.34,197.03 L697.27,180.73 L697.82,180.73 L698.42,168.41 L698.97,168.41 L700.13,151.90 L700.68,151.90 L701.34,142.10 L701.89,142.10 L702.98,132.14 L703.53,132.14 L704.43,127.10 L704.98,127.10 L706.11,125.96 L706.66,125.96 L708.15,130.09 L708.70,130.09 L710.05,138.68 L710.60,138.68 L711.58,148.40 L712.13,148.40 L713.48,163.35 L714.03,163.35 L715.21,178.85 L715.76,178.85 L716.69,192.66 L717.24,192.66 L717.94,204.41 L718.49,204.41 L719.64,219.50 L720.19,219.50 L721.30,232.71 L721.85,232.71 L723.34,245.66 L723.89,245.66 L725.39,254.02 L725.94,254.02 L727.09,256.89 L727.64,256.89 L728.55,256.11 L729.10,256.11 L730.52,249.72 L731.07,249.72 L731.65,243.58 L732.20,243.58 L732.87,235.03 L733.42,235.03 L734.53,220.93 L735.08,220.93 L736.24,204.35 L736.79,204.35 L737.50,191.52 L738.05,191.52 L739.22,174.00 L739.77,174.00 L741.20,155.54 L741.75,155.54 L742.68,143.86 L743.23,143.86 L744.21,134.46 L744.76,134.46 L745.55,128.93 L746.10,128.93 L746.95,126.07 L747.50,126.07 L749.00,127.36 L749.55,127.36 L750.49,131.99 L751.04,131.99 L752.53,142.96 L753.08,142.96 L754.53,157.94 L755.08,157.94 L756.22,172.95 L756.77,172.95 L757.59,185.99 L758.14,185.99 L759.65,205.87 L760.20,205.87 L761.25,220.43 L761.80,220.43 L762.77,232.81 L763.32,232.81 L764.19,242.54 L764.74,242.54 L766.26,252.53 L766.81,252.53 L767.85,256.39 L768.40,256.39 L769.25,256.82 L769.80,256.82 L770.82,253.69 L771.37,253.69 L772.06,248.61 L772.61,248.61 L773.78,238.14 L774.33,238.14 L775.32,225.85 L775.87,225.85 L776.72,212.98 L777.27,212.98 L778.59,194.33 L779.14,194.33 L780.51,175.00 L781.06,175.00 L781.64,164.14 L782.19,164.14 L783.27,150.05 L783.82,150.05 L784.65,140.15 L785.20,140.15 L786.67,130.02 L787.22,130.02 L788.54,125.96 L789.09,125.96 L789.90,126.37 L790.45,126.37 L791.28,129.41 L791.83,129.41 L792.54,134.44 L793.09,134.44 L794.61,146.71 L795.16,146.71 L796.02,157.41 L796.57,157.41 L797.72,172.28 L798.27,172.28 L799.29,187.11 L799.84,187.11 L801.03,203.71 L801.58,203.71 L802.73,219.17 L803.28,219.17 L804.57,233.92 L805.12,233.92 L805.80,242.18 L806.35,242.18 L807.65,251.43 L808.20,251.43 L809.06,255.57 L809.61,255.57 L810.69,256.95 L811.24,256.95 L812.13,253.68 L812.68,253.68 L813.54,245.81 L814.09,245.81 L815.17,231.69 L815.72,231.69 L816.73,214.31 L817.28,214.31 L818.20,196.09 L818.75,196.09 L820.04,172.93 L820.59,172.93 L821.72,153.63 L822.27,153.63 L822.88,142.64 L823.43,142.64 L824.24,132.85 L824.79,132.85 L825.80,126.69 L826.35,126.69 L827.80,127.26 L828.35,127.26 L829.77,136.30 L830.32,136.30 L831.41,149.38 L831.96,149.38 L832.55,160.70 L833.10,160.70 L834.41,181.98 L834.96,181.98 L835.95,200.36 L836.50,200.36 L837.62,219.58 L838.17,219.58 L839.42,237.28 L839.97,237.28 L841.14,249.61 L841.69,249.61 L842.73,255.84 L843.28,255.84 L844.72,255.95 L845.27,255.95 L846.21,250.33 L846.76,250.33 L847.71,240.21 L848.26,240.21 L849.65,221.73 L850.20,221.73 L850.96,206.90 L851.51,206.90 L852.36,190.00 L852.91,190.00 L854.28,167.31 L854.83,167.31 L855.46,154.63 L856.01,154.63 L857.38,138.01 L857.93,138.01 L859.17,128.53 L859.72,128.53 L860.71,125.80 L861.26,125.80 L862.10,127.00 L862.65,127.00 L863.97,132.44 L864.52,132.44 L865.96,142.68 L866.51,142.68 L867.22,151.15 L867.77,151.15 L868.80,163.52 L869.35,163.52 L870.45,177.86 L871.00,177.86 L872.04,192.47 L872.59,192.47 L873.48,205.59 L874.03,205.59 L874.75,216.70 L875.30,216.70 L876.43,230.16 L876.98,230.16 L878.33,242.73 L878.88,242.73 L879.52,248.78 L880.07,248.78 L880.86,253.72 L881.41,253.72 L882.76,256.92 L883.31,256.92 L884.65,253.91 L885.20,253.91 L886.40,243.06 L886.95,243.06 L887.55,232.40 L888.10,232.40 L889.36,211.28 L889.91,211.28 L891.42,184.26 L891.97,184.26 L893.50,158.25 L894.05,158.25 L895.29,140.31 L895.84,140.31 L896.46,132.10 L897.01,132.10 L898.39,125.89 L898.94,125.89 L899.72,126.66 L900.27,126.66 L901.46,131.58 L902.01,131.58 L903.49,142.44 L904.04,142.44 L905.30,155.91 L905.85,155.91 L906.54,166.82 L907.09,166.82 L907.95,180.06 L908.50,180.06 L909.95,199.69 L910.50,199.69 L911.21,211.81 L911.76,211.81 L912.92,226.94 L913.47,226.94 L914.43,238.48 L914.98,238.48 L915.71,246.31 L916.26,246.31 L917.43,253.65 L917.98,253.65 L918.59,256.30 L919.14,256.30 L919.81,256.96 L920.36,256.96 L921.30,255.26 L921.85,255.26 L922.48,252.08 L923.03,252.08 L923.66,247.44 L924.21,247.44 L925.33,238.50 L925.88,238.50 L927.17,226.03 L927.72,226.03 L929.13,210.41 L929.68,210.41 L930.38,199.73 L930.93,199.73 L931.91,186.32 L932.46,186.32 L933.33,174.07 L933.88,174.07 L935.03,160.30 L935.58,160.30 L936.62,148.83 L937.17,148.83 L938.64,137.07 L939.19,137.07 L940.12,130.91 L940.67,130.91 L941.29,127.69 L941.84,127.69 L943.08,125.80 L943.63,125.80 L944.35,127.08 L944.90,127.08 L946.07,132.95 L946.62,132.95 L947.68,142.32 L948.23,142.32 L949.67,158.26 L950.22,158.26 L951.33,174.04 L951.88,174.04 L953.04,191.65 L953.59,191.65 L954.42,205.79 L954.97,205.79 L956.06,221.83 L956.61,221.83 L957.43,233.57 L957.98,233.57 L959.27,246.23 L959.82,246.23 L960.89,253.56 L961.44,253.56 L962.13,256.47 L962.68,256.47 L963.48,256.74 L964.03,256.74 L964.96,253.42 L965.51,253.42 L966.78,244.30 L967.33,244.30" fill="none" stroke="#a2d0f8" stroke-width="1.8" stroke-linejoin="round"/><path d="M400,265.8 L404,258.8 L408,265.8 Z" fill="#a2d0f8"/><path d="M743.5,115.5 L751.5,115.5 L747.5,123 Z" fill="#a2d0f8"/><circle cx="595.9" cy="99.9" r="4.6" fill="#a2d0f8"/></svg>
<div style="position:absolute;left:427.36px;top:248.56px;font-size:8.2px;line-height:8.2px;color:#4a4a4a;font-weight:400;white-space:nowrap;font-family:'Liberation Sans', sans-serif;">66.7min</div>
<div style="position:absolute;left:568.68px;top:248.56px;font-size:8.2px;line-height:8.2px;color:#4a4a4a;font-weight:400;white-space:nowrap;font-family:'Liberation Sans', sans-serif;">83.3min</div>
<div style="position:absolute;left:710.02px;top:248.56px;font-size:8.2px;line-height:8.2px;color:#4a4a4a;font-weight:400;white-space:nowrap;font-family:'Liberation Sans', sans-serif;">100.0min</div>
<div style="position:absolute;left:851.36px;top:248.56px;font-size:8.2px;line-height:8.2px;color:#4a4a4a;font-weight:400;white-space:nowrap;font-family:'Liberation Sans', sans-serif;">116.7min</div>
<div style="position:absolute;left:603.50px;top:92.15px;font-size:16.6px;line-height:16.6px;color:#e0e0e0;font-weight:400;white-space:nowrap;font-family:'Liberation Sans', sans-serif;-webkit-text-stroke:0.3px #e0e0e0">-5.899241613</div>
<div style="position:absolute;left:973px;top:277px;width:1px;height:320px;background:#0c0c0c;"></div>
<div style="position:absolute;left:328px;top:277px;width:1px;height:320px;background:#0e0e0e;"></div>
<div style="position:absolute;left:329px;top:277px;width:644px;height:320px;background:#fcfcfc;"></div>
<div style="position:absolute;left:330.5px;top:277px;width:641px;height:59px;background:#fafafa;"></div>
<div style="position:absolute;left:330.5px;top:336px;width:641px;height:1px;background:#e0e0e0;"></div>
<div style="position:absolute;left:331px;top:337px;width:640px;height:260px;background:#e8e8e8;"></div>
<svg style="position:absolute;left:350px;top:302px" width="13" height="13" viewBox="0 0 13 13"><path d="M10.6,6 H3 M6.8,1.6 L2.2,6 L6.8,10.4" fill="none" stroke="#858585" stroke-width="2.4" stroke-linecap="round" stroke-linejoin="round"/></svg>
<svg style="position:absolute;left:939px;top:302px" width="13" height="13" viewBox="0 0 13 13"><path d="M2.5,6.1 H10.5 M6.3,1.9 L10.8,6.1 L6.3,10.3" fill="none" stroke="#111" stroke-width="2.4" stroke-linecap="round" stroke-linejoin="round"/></svg>
<svg style="position:absolute;left:612px;top:297px" width="20" height="20" viewBox="0 0 20 20"><path d="M6.4,7.3 L8.6,5.4 Q10.4,3.9 12.2,5.4 L14.4,7.3" fill="none" stroke="#3c3c3c" stroke-width="1.3"/><rect x="6.9" y="7.2" width="7" height="7.7" rx="1" fill="#fff" stroke="#4a4a4a" stroke-width="1.2"/><rect x="7.3" y="9.4" width="6.2" height="2.9" fill="#8a8a8a"/></svg>
<svg style="position:absolute;left:645px;top:301px" width="12" height="12" viewBox="0 0 12 12"><path d="M2.5,9.5 L9.5,2.5" stroke="#111" stroke-width="1.5"/><path d="M6.3,1 H11 V5.7 Z M1,6.3 V11 H5.7 Z" fill="#111"/></svg>
<svg style="position:absolute;left:675px;top:303px" width="9" height="9" viewBox="0 0 9 9"><path d="M1.2,1.2 L7.8,7.8 M7.8,1.2 L1.2,7.8" stroke="#111" stroke-width="2.4"/></svg>
<div style="position:absolute;left:413.40px;top:352.75px;font-size:10.1px;line-height:10.1px;color:#3a3a3a;font-weight:700;white-space:nowrap;font-family:'Liberation Sans', sans-serif;">Title</div>
<div style="position:absolute;left:657.60px;top:352.75px;font-size:10.1px;line-height:10.1px;color:#3a3a3a;font-weight:700;white-space:nowrap;font-family:'Liberation Sans', sans-serif;">Tile Type</div>
<div style="position:absolute;left:413px;top:370px;width:230px;height:25px;background:#fff;border:1px solid #dcdcdc;border-radius:2px"></div>
<div style="position:absolute;left:420.20px;top:378.67px;font-size:11.5px;line-height:11.5px;color:#222;font-weight:400;white-space:nowrap;font-family:'Liberation Sans', sans-serif;">voltage :zap:</div>
<div style="position:absolute;left:657px;top:370px;width:230px;height:25px;background:#fff;border:1px solid #dcdcdc;border-radius:4px"></div>
<div style="position:absolute;left:664.80px;top:378.67px;font-size:11.5px;line-height:11.5px;color:#222;font-weight:400;white-space:nowrap;font-family:'Liberation Sans', sans-serif;">Line Graph</div>
<svg style="position:absolute;left:877px;top:377px" width="8" height="12" viewBox="0 0 8 12"><path d="M0.8,5 L4,1 L7.2,5 Z M0.8,7 L4,11 L7.2,7 Z" fill="#222"/></svg>
<div style="position:absolute;left:413.00px;top:408.15px;font-size:10.1px;line-height:10.1px;color:#3a3a3a;font-weight:700;white-space:nowrap;font-family:'Liberation Sans', sans-serif;">Signal Keys</div>
<div style="position:absolute;left:447px;top:426px;width:413px;height:29px;background:#fff;border-radius:3px"></div>
<div style="position:absolute;left:451.80px;top:434.81px;font-size:11.8px;line-height:11.8px;color:#2a9890;font-weight:400;white-space:nowrap;font-family:'Liberation Mono', monospace;-webkit-text-stroke:0.45px #2a9890">voltage :zap:</div>
<svg style="position:absolute;left:425px;top:437px" width="10" height="9" viewBox="0 0 10 9"><path d="M1.6,1.2 L8.4,7.8 M8.4,1.2 L1.6,7.8" stroke="#2f6fd0" stroke-width="2.6"/></svg>
<div style="position:absolute;left:862px;top:425px;width:25px;height:28px;background:#fff;border:1px solid #c8c8c8;border-radius:3px"></div>
<div style="position:absolute;left:866px;top:429px;width:20px;height:23px;background:#9dcaf6;"></div>
<div style="position:absolute;left:447px;top:458.5px;width:442px;height:28.5px;background:#fff;border-radius:3px"></div>
<svg style="position:absolute;left:425px;top:466px" width="10" height="10" viewBox="0 0 10 10"><path d="M5,0.5 V9.5 M0.5,5 H9.5" stroke="#111" stroke-width="2.3"/></svg>
<div style="position:absolute;left:413.20px;top:498.35px;font-size:10.1px;line-height:10.1px;color:#3a3a3a;font-weight:700;white-space:nowrap;font-family:'Liberation Sans', sans-serif;">Y Axis Type</div>
<div style="position:absolute;left:534.60px;top:498.35px;font-size:10.1px;line-height:10.1px;color:#3a3a3a;font-weight:700;white-space:nowrap;font-family:'Liberation Sans', sans-serif;">Y Axis Minimum</div>
<div style="position:absolute;left:718.30px;top:498.35px;font-size:10.1px;line-height:10.1px;color:#3a3a3a;font-weight:700;white-space:nowrap;font-family:'Liberation Sans', sans-serif;">Y Axis Maximum</div>
<div style="position:absolute;left:413px;top:516px;width:107px;height:24.5px;background:#fff;border:1px solid #dcdcdc;border-radius:4px"></div>
<div style="position:absolute;left:420.60px;top:524.07px;font-size:11.5px;line-height:11.5px;color:#222;font-weight:400;white-space:nowrap;font-family:'Liberation Sans', sans-serif;">Linear</div>
<svg style="position:absolute;left:510px;top:523px" width="8" height="12" viewBox="0 0 8 12"><path d="M0.8,5 L4,1 L7.2,5 Z M0.8,7 L4,11 L7.2,7 Z" fill="#222"/></svg>
<div style="position:absolute;left:535px;top:516px;width:169px;height:24.5px;background:#fff;border:1px solid #dcdcdc;border-radius:2px"></div>
<div style="position:absolute;left:541.10px;top:523.44px;font-size:12px;line-height:12px;color:#8c8c8c;font-weight:400;white-space:nowrap;font-family:'Liberation Sans', sans-serif;">auto-detect</div>
<div style="position:absolute;left:718px;top:516px;width:169px;height:24.5px;background:#fff;border:1px solid #dcdcdc;border-radius:2px"></div>
<div style="position:absolute;left:724.40px;top:523.44px;font-size:12px;line-height:12px;color:#8c8c8c;font-weight:400;white-space:nowrap;font-family:'Liberation Sans', sans-serif;">auto-detect</div>
</div></body></html>
